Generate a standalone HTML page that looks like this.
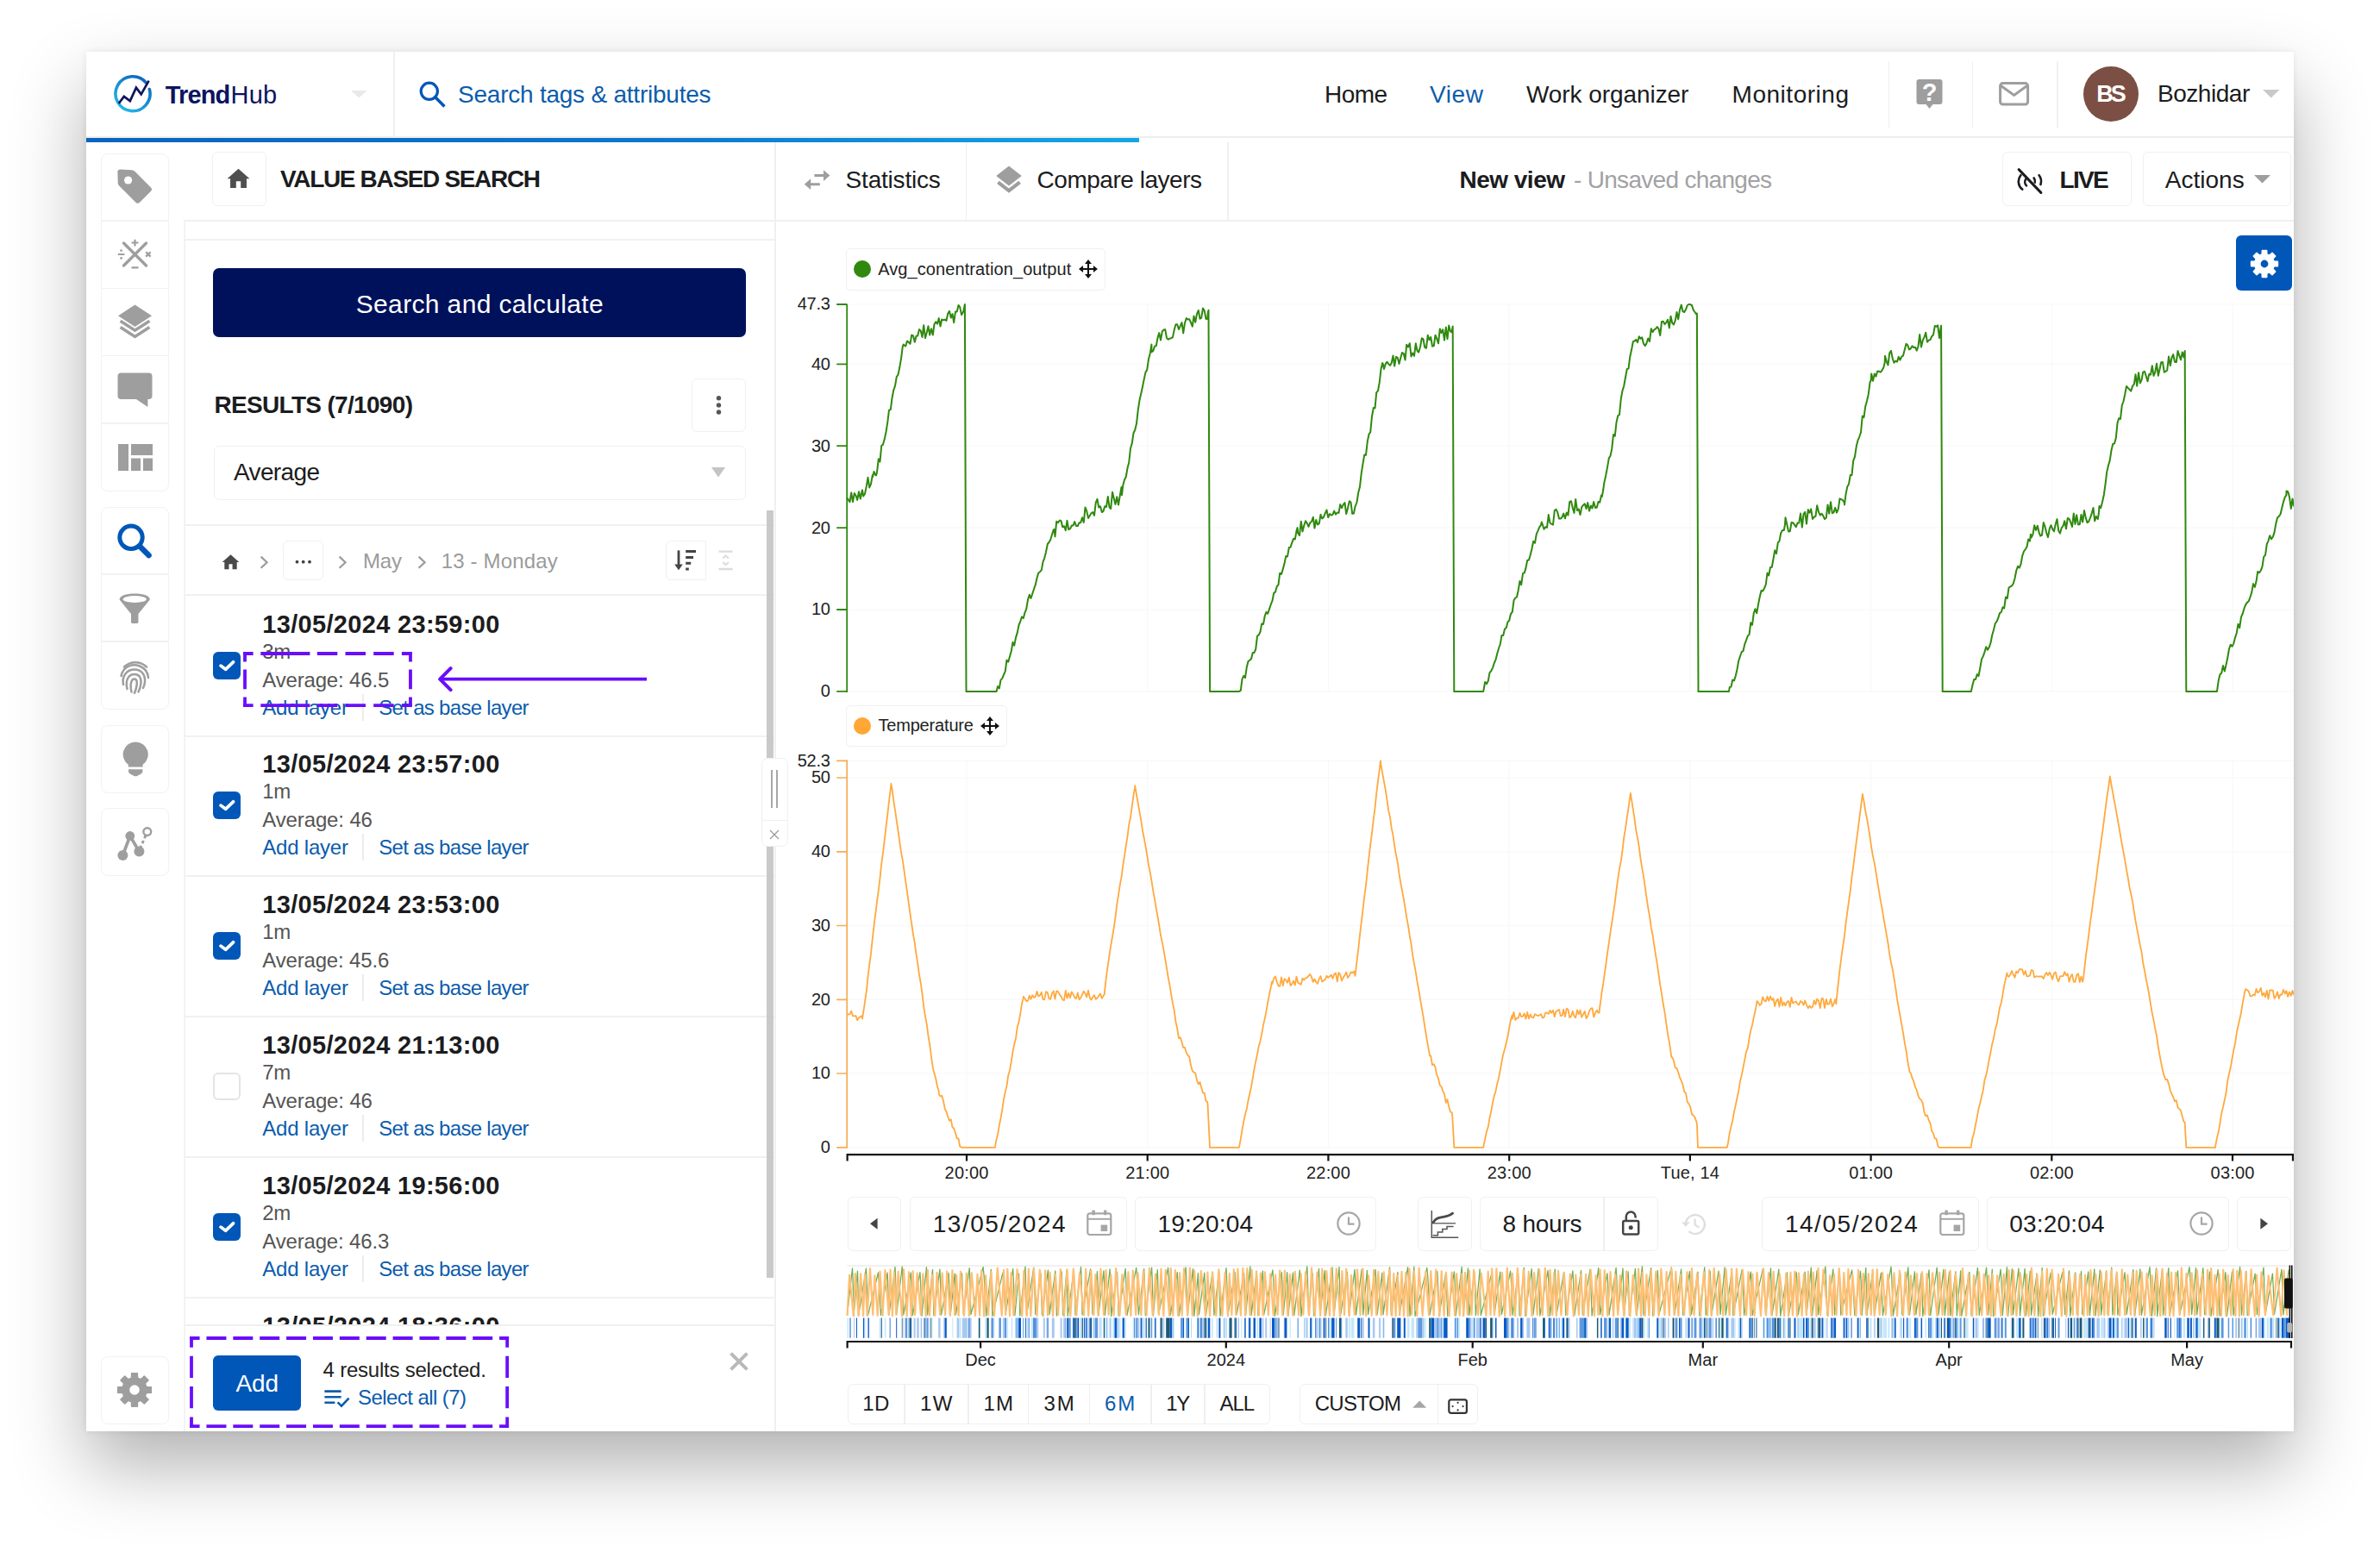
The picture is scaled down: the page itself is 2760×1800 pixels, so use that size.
<!DOCTYPE html>
<html lang="en"><head><meta charset="utf-8"><title>TrendHub - Value based search</title>
<style>
*{box-sizing:border-box;margin:0;padding:0}
html,body{width:2760px;height:1800px;background:#fff;overflow:hidden}
body{position:relative;font-family:"Liberation Sans",sans-serif;color:#1b1c20}
.b{position:absolute;display:block}
.t{position:absolute;white-space:pre;line-height:1;display:block}
#win{position:absolute;left:100px;top:60px;width:2560px;height:1600px;background:#fff;
 box-shadow:0 40px 80px rgba(0,0,0,.305),0 0 7px rgba(0,0,0,.08)}
.btn{position:absolute;background:#fff;border:1.7px solid #f0f0f1;border-radius:6px}
.ln{position:absolute;background:#ededed}
</style></head>
<body>
<div id="win"></div>
<div class="b" style="left:100.0px;top:158.3px;width:2560.0px;height:1.7px;background:#eeeeef"></div>
<div class="b" style="left:100.0px;top:160.4px;width:1220.6px;height:4.5px;background:linear-gradient(90deg,#0a63bf 0%,#0b78cf 55%,#14a7e4 100%)"></div>
<div class="b" style="left:456.0px;top:60.0px;width:1.6px;height:99.0px;background:#f0f0f1"></div>
<svg class="b" style="left:128.2px;top:86.4px;" width="50" height="50" viewBox="0 0 50 50"><defs><linearGradient id="lg" x1="0.1" y1="1" x2="0.8" y2="0"><stop offset="0" stop-color="#27bdea"/><stop offset="1" stop-color="#0a66bd"/></linearGradient></defs><path d="M41.6 10.2A20 20 0 1 0 45.3 17.5" fill="none" stroke="url(#lg)" stroke-width="3.6" stroke-linecap="round"/><path d="M9.7 34L15.8 25.9L22.8 31.1L29.9 15.6L35.7 23.4L44.6 7.6" fill="none" stroke="#10145a" stroke-width="2.7" stroke-linejoin="miter"/></svg>
<span class="t" style="left:191.8px;top:95.7px;font-size:29px;color:#0b1560;font-weight:700;letter-spacing:-0.86px;">Trend</span>
<span class="t" style="left:267.6px;top:95.7px;font-size:29px;color:#0b1560;letter-spacing:0.15px;">Hub</span>
<svg class="b" style="left:407.0px;top:104.5px;" width="19" height="9" viewBox="0 0 19 9"><path d="M0 0H18.5L9.25 8.6z" fill="#e9e9e9"/></svg>
<svg class="b" style="left:484.4px;top:92.0px;" width="34" height="34" viewBox="0 0 34 34"><circle cx="13.8" cy="13.8" r="9.6" fill="none" stroke="#0057b8" stroke-width="3.2"/><path d="M20.8 20.8L30.2 30.2" stroke="#0057b8" stroke-width="3.6" stroke-linecap="square"/></svg>
<span class="t" style="left:531.0px;top:96.0px;font-size:28px;color:#0b5cad;letter-spacing:-0.23px;">Search tags &amp; attributes</span>
<span class="t" style="left:1536.0px;top:96.0px;font-size:28px;color:#1b1c20;letter-spacing:-0.56px;">Home</span>
<span class="t" style="left:1658.0px;top:96.0px;font-size:28px;color:#0b5cad;letter-spacing:0.61px;">View</span>
<span class="t" style="left:1770.0px;top:96.0px;font-size:28px;color:#1b1c20;letter-spacing:-0.07px;">Work organizer</span>
<span class="t" style="left:2008.6px;top:96.0px;font-size:28px;color:#1b1c20;letter-spacing:0.52px;">Monitoring</span>
<div class="b" style="left:2190.2px;top:70.5px;width:1.3px;height:77.0px;background:#f0f0f1"></div>
<div class="b" style="left:2286.5px;top:70.5px;width:1.3px;height:77.0px;background:#f0f0f1"></div>
<div class="b" style="left:2385.4px;top:70.5px;width:1.3px;height:77.0px;background:#f0f0f1"></div>
<svg class="b" style="left:2222.0px;top:91.0px;" width="32" height="37" viewBox="0 0 32 37"><path d="M3.5 1H27.5A3 3 0 0 1 30.5 4V27A3 3 0 0 1 27.5 30H19.5L15.5 35L11.5 30H3.5A3 3 0 0 1 0.5 27V4A3 3 0 0 1 3.5 1z" fill="#9e9e9e"/><text x="15.5" y="26.4" font-family='"Liberation Sans",sans-serif' font-weight="700" font-size="29" fill="#fff" text-anchor="middle">?</text></svg>
<svg class="b" style="left:2318.0px;top:94.6px;" width="36" height="29" viewBox="0 0 36 29"><rect x="1.6" y="1.6" width="32" height="24.4" rx="3" fill="none" stroke="#9e9e9e" stroke-width="3"/><path d="M2.5 4.5L17.6 15.5L32.7 4.5" fill="none" stroke="#9e9e9e" stroke-width="3"/></svg>
<div class="b" style="left:2416.4px;top:77.0px;width:64.0px;height:64.0px;background:#7b4f43;border-radius:50%"></div>
<span class="t" style="left:2431.3px;top:95.7px;font-size:27px;color:#fff;font-weight:700;letter-spacing:-3.01px;">BS</span>
<span class="t" style="left:2502.0px;top:95.3px;font-size:28px;color:#1b1c20;letter-spacing:-0.46px;">Bozhidar</span>
<svg class="b" style="left:2623.5px;top:104.2px;" width="20" height="10" viewBox="0 0 20 10"><path d="M0 0H19.5L9.75 9.6z" fill="#c9c9c9"/></svg>
<div class="b" style="left:117.0px;top:177.5px;width:78.8px;height:392.3px;border:1.7px solid #f2f2f4;border-radius:8px;background:#fff"></div>
<div class="b" style="left:117.0px;top:255.3px;width:78.8px;height:1.7px;background:#f2f2f4"></div>
<div class="b" style="left:117.0px;top:333.8px;width:78.8px;height:1.7px;background:#f2f2f4"></div>
<div class="b" style="left:117.0px;top:411.8px;width:78.8px;height:1.7px;background:#f2f2f4"></div>
<div class="b" style="left:117.0px;top:490.2px;width:78.8px;height:1.7px;background:#f2f2f4"></div>
<div class="b" style="left:117.0px;top:587.8px;width:78.8px;height:235.0px;border:1.7px solid #f2f2f4;border-radius:8px;background:#fff"></div>
<div class="b" style="left:117.0px;top:665.0px;width:78.8px;height:1.7px;background:#f2f2f4"></div>
<div class="b" style="left:117.0px;top:743.4px;width:78.8px;height:1.7px;background:#f2f2f4"></div>
<div class="b" style="left:117.0px;top:840.5px;width:78.8px;height:79.1px;border:1.7px solid #f2f2f4;border-radius:8px;background:#fff"></div>
<div class="b" style="left:117.0px;top:937.4px;width:78.8px;height:78.6px;border:1.7px solid #f2f2f4;border-radius:8px;background:#fff"></div>
<div class="b" style="left:117.0px;top:1573.0px;width:78.8px;height:78.6px;border:1.7px solid #f2f2f4;border-radius:8px;background:#fff"></div>
<svg class="b" style="left:136.0px;top:196.0px;" width="41" height="42" viewBox="0 0 41 42"><path d="M3.5 0.6L17 1.2Q19 1.4 20.4 2.8L39 21.4Q41 23.6 39 25.8L26 38.8Q23.6 41 21.4 38.8L2.2 19.6Q0.8 18.2 0.7 16.2L0.4 3.6Q0.4 0.6 3.5 0.6z" fill="#9e9e9e"/><circle cx="12.6" cy="13" r="4.6" fill="#fff"/></svg>
<svg class="b" style="left:136.0px;top:277.0px;" width="41" height="36" viewBox="0 0 41 36"><g stroke="#9e9e9e" stroke-width="3.4" stroke-linecap="round" fill="none"><path d="M7.5 5L33.5 31M33.5 5L7.5 31"/></g><g stroke="#9e9e9e" stroke-width="2.2" fill="none"><path d="M16.5 4.5H24.5M20.5 0.8V8.5M16.5 33.3H24.5M0.8 18H8.4M33.2 15.2L38.6 20.6M38.6 15.2L33.2 20.6"/></g><circle cx="4.6" cy="13.6" r="1.4" fill="#9e9e9e"/><circle cx="4.6" cy="22.4" r="1.4" fill="#9e9e9e"/></svg>
<svg class="b" style="left:136.0px;top:353.0px;" width="41" height="41" viewBox="0 0 41 41"><path d="M20.5 0.6L40 13.3L20.5 26L1 13.3z" fill="#9e9e9e"/><path d="M3.6 19.2L20.5 30.2L37.4 19.2" fill="none" stroke="#9e9e9e" stroke-width="3.6"/><path d="M3.6 26.4L20.5 37.4L37.4 26.4" fill="none" stroke="#9e9e9e" stroke-width="3.6"/></svg>
<svg class="b" style="left:136.0px;top:431.6px;" width="41" height="41" viewBox="0 0 41 41"><path d="M4.5 0.4H36.5A4 4 0 0 1 40.5 4.4V27A4 4 0 0 1 36.5 31H35.4V40L22 31H4.5A4 4 0 0 1 0.5 27V4.4A4 4 0 0 1 4.5 0.4z" fill="#9e9e9e"/></svg>
<svg class="b" style="left:136.5px;top:515.0px;" width="40" height="31" viewBox="0 0 40 31"><path d="M0 0H12V31H0zM15 0H40V13H15zM15 16.5H26V31H15zM29 16.5H40V31H29z" fill="#9e9e9e"/></svg>
<svg class="b" style="left:132.0px;top:603.0px;" width="48" height="48" viewBox="0 0 48 48"><circle cx="20" cy="20.3" r="13.2" fill="none" stroke="#0057b8" stroke-width="5"/><path d="M30 30.5L40.5 41" stroke="#0057b8" stroke-width="6.6" stroke-linecap="round"/></svg>
<svg class="b" style="left:138.0px;top:687.6px;" width="37" height="36" viewBox="0 0 37 36"><path d="M0.6 7.5C0.6 2.5 8 0.4 18.2 0.4S35.8 2.5 35.8 7.5L22.4 24V33.4Q22.4 35 20.6 35H15.8Q14 35 14 33.4V24z" fill="#9e9e9e"/><ellipse cx="18.2" cy="7" rx="13.6" ry="3.9" fill="#fff"/></svg>
<svg class="b" style="left:138.0px;top:763.5px;" width="37" height="41" viewBox="0 0 37 41"><g fill="none" stroke="#9e9e9e" stroke-width="2.5" stroke-linecap="round"><path d="M6 9.5C13 2.5 25 2.5 32 9.5"/><path d="M2.5 20C5 8 16 5.5 24 8.5C30 11 33.5 16 34 22"/><path d="M5 30C3 20 9 12.5 18 12.5C26.5 12.5 30.5 19 30 26.5C29.8 29.5 29 32 28 34"/><path d="M9.5 35C7 25 11 18 18 18C24 18 26 23 25.5 28C25.2 32 24 35.5 22.5 38.5"/><path d="M14.5 38.5C12.5 30 14 23.5 18 23.5C21 23.5 21 28 20.5 31C20 34.5 19 37.5 18 39.8"/></g></svg>
<svg class="b" style="left:141.0px;top:860.0px;" width="32" height="41" viewBox="0 0 32 41"><path d="M16.2 0.6A14.4 14.4 0 0 1 24.6 26.8V29.6H7.8V26.8A14.4 14.4 0 0 1 16.2 0.6z" fill="#9e9e9e"/><path d="M8 32.2H24.4V34.4Q24.4 36.4 22.6 37.4L18.4 39.8Q16.2 40.8 14 39.8L9.8 37.4Q8 36.4 8 34.4z" fill="#9e9e9e"/></svg>
<svg class="b" style="left:134.0px;top:955.0px;" width="46" height="46" viewBox="0 0 46 46"><path d="M8.4 37L16.8 14.5L27.4 32.6" fill="none" stroke="#9e9e9e" stroke-width="3.6"/><path d="M28.5 29L36 11.5" fill="none" stroke="#9e9e9e" stroke-width="3" stroke-dasharray="3.4 3"/><circle cx="8.4" cy="37" r="6" fill="#9e9e9e"/><circle cx="16.8" cy="14.5" r="5.4" fill="#9e9e9e"/><circle cx="27.4" cy="32.6" r="6" fill="#9e9e9e"/><circle cx="36.8" cy="9.6" r="4.4" fill="#fff" stroke="#9e9e9e" stroke-width="2.4"/></svg>
<svg class="b" style="left:136.0px;top:1592.0px;" width="40" height="40" viewBox="0 0 40 40"><path d="M16.5 6.2L16.7 0.7L23.3 0.7L23.5 6.2L27.2 7.8L31.3 4.0L36.0 8.7L32.2 12.8L33.8 16.5L39.3 16.7L39.3 23.3L33.8 23.5L32.2 27.2L36.0 31.3L31.3 36.0L27.2 32.2L23.5 33.8L23.3 39.3L16.7 39.3L16.5 33.8L12.8 32.2L8.7 36.0L4.0 31.3L7.8 27.2L6.2 23.5L0.7 23.3L0.7 16.7L6.2 16.5L7.8 12.8L4.0 8.7L8.7 4.0L12.8 7.8zM26.6 20A6.6 6.6 0 1 0 13.4 20A6.6 6.6 0 1 0 26.6 20z" fill="#9e9e9e" fill-rule="evenodd" stroke="#9e9e9e" stroke-width="1.6" stroke-linejoin="round"/></svg>
<div class="b" style="left:213.7px;top:255.1px;width:2446.3px;height:1.8px;background:#f0f0f1"></div>
<div class="btn" style="left:245.6px;top:176.0px;width:63.0px;height:63.2px;"></div>
<svg class="b" style="left:263.3px;top:194.0px;" width="27" height="25" viewBox="0 0 20 18.5"><path d="M10 1.2L0.4 9.8H3V17.8H8V12H12V17.8H17V9.8H19.6z" fill="#4f4f4f"/></svg>
<span class="t" style="left:325.0px;top:194.3px;font-size:28px;color:#1b1c20;font-weight:700;letter-spacing:-1.33px;">VALUE BASED SEARCH</span>
<div class="b" style="left:897.8px;top:165.0px;width:1.8px;height:1495.0px;background:#f0f0f2"></div>
<div class="b" style="left:1119.7px;top:165.0px;width:1.6px;height:90.0px;background:#f0f0f2"></div>
<div class="b" style="left:1423.4px;top:165.0px;width:1.6px;height:90.0px;background:#f0f0f2"></div>
<svg class="b" style="left:932.0px;top:196.0px;" width="31" height="25" viewBox="0 0 31 25"><path d="M12.4 6.1H23V1.2L30.4 7.6L23 14V9.1H12.4z" fill="#9e9e9e"/><path d="M18.8 16.2H8.2V11.3L0.8 17.7L8.2 24.1V19.2H18.8z" fill="#9e9e9e"/></svg>
<span class="t" style="left:980.6px;top:195.1px;font-size:28px;color:#1b1c20;letter-spacing:-0.20px;">Statistics</span>
<svg class="b" style="left:1154.0px;top:191.5px;" width="32" height="33" viewBox="0 0 32 33"><path d="M16 0.6L30.8 12L16 23.4L1.2 12z" fill="#9e9e9e"/><path d="M3.4 19.4L16 29.2L28.6 19.4" fill="none" stroke="#9e9e9e" stroke-width="4.2"/></svg>
<span class="t" style="left:1202.6px;top:195.1px;font-size:28px;color:#1b1c20;letter-spacing:-0.48px;">Compare layers</span>
<span class="t" style="left:1692.5px;top:194.7px;font-size:28px;color:#1b1c20;font-weight:700;letter-spacing:-0.51px;">New view</span>
<span class="t" style="left:1825.0px;top:194.7px;font-size:28px;color:#a2a2a4;letter-spacing:-0.70px;">- Unsaved changes</span>
<div class="btn" style="left:2321.7px;top:176.0px;width:150.0px;height:63.2px;"></div>
<svg class="b" style="left:2339.0px;top:194.5px;" width="32" height="31" viewBox="0 0 32 31"><g fill="none" stroke="#1b1c20" stroke-width="2.6" stroke-linecap="round"><path d="M6.2 24.6A11.6 11.6 0 0 1 4.4 8.2"/><path d="M25.6 8.2A11.6 11.6 0 0 1 27.4 19"/><path d="M11 20.4A6 6 0 0 1 10.4 12.6"/><path d="M19.6 11.4A6 6 0 0 1 20.8 16.6"/></g><path d="M2.2 1.6L27.8 28.4" stroke="#1b1c20" stroke-width="3" stroke-linecap="round"/></svg>
<span class="t" style="left:2388.4px;top:195.2px;font-size:28px;color:#1b1c20;font-weight:700;letter-spacing:-1.61px;">LIVE</span>
<div class="btn" style="left:2484.6px;top:176.0px;width:172.4px;height:63.2px;"></div>
<span class="t" style="left:2510.7px;top:195.2px;font-size:28px;color:#1b1c20;letter-spacing:0.03px;">Actions</span>
<svg class="b" style="left:2614.0px;top:203.0px;" width="20" height="10" viewBox="0 0 20 10"><path d="M0 0H19L9.5 9.4z" fill="#9e9e9e"/></svg>
<div class="b" style="left:2593.3px;top:273.0px;width:64.4px;height:64.4px;background:#0057b8;border-radius:6px"></div>
<svg class="b" style="left:2607.0px;top:286.5px;" width="38" height="38" viewBox="0 0 38 38"><path d="M16.2 8.0L16.4 3.6L21.6 3.6L21.8 8.0L24.8 9.2L28.0 6.3L31.7 10.0L28.8 13.2L30.0 16.2L34.4 16.4L34.4 21.6L30.0 21.8L28.8 24.8L31.7 28.0L28.0 31.7L24.8 28.8L21.8 30.0L21.6 34.4L16.4 34.4L16.2 30.0L13.2 28.8L10.0 31.7L6.3 28.0L9.2 24.8L8.0 21.8L3.6 21.6L3.6 16.4L8.0 16.2L9.2 13.2L6.3 10.0L10.0 6.3L13.2 9.2zM24.2 19A5.2 5.2 0 1 0 13.8 19A5.2 5.2 0 1 0 24.2 19z" fill="#fff" fill-rule="evenodd" stroke="#fff" stroke-width="1.6" stroke-linejoin="round"/></svg>
<div class="btn" style="left:981.4px;top:288.0px;width:300.2px;height:48.6px;border-width:1.6px;border-radius:5px"></div>
<div class="b" style="left:989.6px;top:302.0px;width:20.0px;height:20.0px;background:#2f890e;border-radius:50%"></div>
<span class="t" style="left:1018.2px;top:301.7px;font-size:20px;color:#222;letter-spacing:0.09px;">Avg_conentration_output</span>
<svg class="b" style="left:1251.3px;top:301.4px;" width="22" height="22" viewBox="0 0 20 20"><g fill="none" stroke="#111" stroke-width="1.9"><path d="M10 2V18M2 10H18"/></g><path d="M10 0L13.6 4.6H6.4zM10 20L13.6 15.4H6.4zM0 10L4.6 6.4V13.6zM20 10L15.4 6.4V13.6z" fill="#111"/></svg>
<div class="btn" style="left:981.4px;top:818.3px;width:186.2px;height:47.8px;border-width:1.6px;border-radius:5px"></div>
<div class="b" style="left:989.6px;top:832.0px;width:20.0px;height:20.0px;background:#ffa634;border-radius:50%"></div>
<span class="t" style="left:1018.4px;top:831.0px;font-size:20px;color:#222;letter-spacing:-0.17px;">Temperature</span>
<svg class="b" style="left:1137.4px;top:831.0px;" width="22" height="22" viewBox="0 0 20 20"><g fill="none" stroke="#111" stroke-width="1.9"><path d="M10 2V18M2 10H18"/></g><path d="M10 0L13.6 4.6H6.4zM10 20L13.6 15.4H6.4zM0 10L4.6 6.4V13.6zM20 10L15.4 6.4V13.6z" fill="#111"/></svg>
<svg class="b" style="left:900.0px;top:340.0px;" width="1760" height="1020" viewBox="0 0 1760 1020"><path d="M83 461.9H1760" stroke="#f8f8f8" stroke-width="1.2"/><path d="M83 367.0H1760" stroke="#f8f8f8" stroke-width="1.2"/><path d="M83 272.1H1760" stroke="#f8f8f8" stroke-width="1.2"/><path d="M83 177.2H1760" stroke="#f8f8f8" stroke-width="1.2"/><path d="M83 82.3H1760" stroke="#f8f8f8" stroke-width="1.2"/><path d="M83 13.0H1760" stroke="#f8f8f8" stroke-width="1.2"/><path d="M83 990.8H1760" stroke="#f8f8f8" stroke-width="1.2"/><path d="M83 905.0H1760" stroke="#f8f8f8" stroke-width="1.2"/><path d="M83 819.3H1760" stroke="#f8f8f8" stroke-width="1.2"/><path d="M83 733.5H1760" stroke="#f8f8f8" stroke-width="1.2"/><path d="M83 647.8H1760" stroke="#f8f8f8" stroke-width="1.2"/><path d="M83 562.0H1760" stroke="#f8f8f8" stroke-width="1.2"/><path d="M83 542.3H1760" stroke="#f8f8f8" stroke-width="1.2"/><path d="M221.0 13.5V462M221.0 542.2V991" stroke="#f8f8f8" stroke-width="1.2"/><path d="M430.7 13.5V462M430.7 542.2V991" stroke="#f8f8f8" stroke-width="1.2"/><path d="M640.4 13.5V462M640.4 542.2V991" stroke="#f8f8f8" stroke-width="1.2"/><path d="M850.2 13.5V462M850.2 542.2V991" stroke="#f8f8f8" stroke-width="1.2"/><path d="M1059.9 13.5V462M1059.9 542.2V991" stroke="#f8f8f8" stroke-width="1.2"/><path d="M1269.6 13.5V462M1269.6 542.2V991" stroke="#f8f8f8" stroke-width="1.2"/><path d="M1479.3 13.5V462M1479.3 542.2V991" stroke="#f8f8f8" stroke-width="1.2"/><path d="M1689.0 13.5V462M1689.0 542.2V991" stroke="#f8f8f8" stroke-width="1.2"/><path d="M82.0 237.0L83.8 239.6L85.5 242.2L87.2 231.5L89.0 242.1L90.8 232.1L92.5 234.7L94.2 239.9L96.0 230.2L97.8 238.6L99.5 230.0L100.0 228.4L101.2 235.4L103.0 232.7L104.8 223.9L106.5 213.8L108.2 225.4L110.0 221.3L111.8 211.1L112.0 213.3L113.5 207.0L115.2 210.8L116.0 211.4L117.0 207.8L118.8 192.3L120.5 195.4L122.2 177.0L124.0 175.6L125.8 169.1L127.5 161.0L129.2 150.3L131.0 135.6L132.8 135.1L134.5 121.7L136.2 112.7L138.0 107.6L139.8 97.0L141.5 94.6L143.2 86.3L145.0 76.1L146.8 61.8L147.7 59.5L148.5 60.4L150.2 61.5L152.0 55.5L153.8 56.9L155.5 58.8L157.2 48.6L159.0 49.4L160.8 56.8L162.5 49.7L164.2 49.6L166.0 42.1L167.8 43.8L169.5 51.0L171.2 37.2L173.0 52.1L174.8 45.6L176.5 38.3L178.2 48.5L180.0 41.3L181.8 48.6L183.5 36.0L185.2 33.2L187.0 35.7L188.8 29.1L190.5 38.5L192.2 30.5L194.0 31.3L195.8 30.6L197.5 31.9L199.2 23.8L201.0 20.9L202.8 28.6L204.5 24.1L206.2 34.2L208.0 21.4L209.8 21.4L211.5 14.0L213.2 16.1L215.0 25.1L216.8 22.2L217.5 19.7L218.5 14.9L218.9 13.0L220.2 391.8L220.5 461.9L222.0 461.9L223.8 461.9L225.5 461.9L227.2 461.9L229.0 461.9L230.8 461.9L232.5 461.9L234.2 461.9L236.0 461.9L237.8 461.9L239.5 461.9L241.2 461.9L243.0 461.9L244.8 461.9L246.5 461.9L248.2 461.9L250.0 461.9L251.8 461.9L253.5 461.9L255.2 461.9L255.6 461.9L257.0 456.1L258.8 458.4L260.5 448.6L262.2 446.9L264.0 442.6L265.8 438.3L267.5 425.5L269.2 427.7L271.0 421.5L272.8 415.0L274.5 404.8L276.2 408.6L278.0 399.6L279.8 393.6L281.5 385.0L283.2 380.8L285.0 375.4L286.8 377.0L288.5 370.6L290.2 366.3L292.0 355.6L293.8 349.8L295.5 353.9L297.2 348.7L299.0 343.2L300.8 338.2L302.5 330.5L304.2 324.5L306.0 323.2L307.8 321.2L309.5 311.6L311.2 307.3L313.0 300.2L314.8 291.0L316.5 289.0L318.2 286.0L320.0 280.0L321.8 274.4L322.6 274.0L323.5 282.3L325.2 264.8L327.0 266.2L328.8 263.5L330.5 264.1L332.2 271.2L334.0 270.2L335.8 275.1L337.5 263.8L339.2 274.2L341.0 273.2L342.8 269.5L344.5 269.5L346.2 265.1L348.0 269.9L349.8 270.1L351.5 266.2L353.2 266.3L355.0 260.2L356.8 266.0L358.5 248.4L360.2 252.6L362.0 260.9L363.8 258.0L365.5 255.2L367.2 254.0L369.0 257.9L370.8 242.6L372.5 238.9L374.2 248.4L376.0 247.2L377.8 254.1L379.5 252.9L381.2 247.3L383.0 247.9L384.8 235.9L386.5 248.2L388.2 250.0L390.0 230.8L391.8 238.3L393.5 244.9L395.2 236.2L397.0 245.5L398.8 234.7L400.5 224.9L401.0 234.1L402.2 223.3L404.0 216.5L405.8 213.0L407.5 202.8L409.2 196.4L411.0 180.0L412.8 174.1L414.5 162.2L416.2 158.8L418.0 151.3L419.8 135.1L421.5 124.1L423.2 116.8L425.0 108.5L426.8 99.5L428.5 91.6L430.2 89.0L432.0 76.6L433.8 69.7L435.4 59.5L435.5 68.2L437.2 67.2L439.0 61.6L440.8 61.0L442.5 51.9L444.2 46.1L446.0 54.5L447.8 44.4L449.5 42.5L451.2 42.1L453.0 52.1L454.8 53.7L456.5 52.6L458.2 52.2L460.0 51.1L461.8 42.3L463.5 36.2L465.2 36.3L467.0 42.0L468.8 37.8L470.5 34.1L472.2 46.4L474.0 34.7L475.8 29.1L477.5 30.5L479.2 30.1L481.0 34.1L482.8 38.7L484.5 26.4L486.2 33.8L488.0 24.2L489.8 20.0L491.5 29.7L493.2 28.6L495.0 17.5L496.8 20.6L498.5 29.9L500.2 29.7L500.8 22.5L501.5 19.7L502.0 157.9L503.1 461.9L503.8 461.9L505.5 461.9L507.2 461.9L509.0 461.9L510.8 461.9L512.5 461.9L514.2 461.9L516.0 461.9L517.8 461.9L519.5 461.9L521.2 461.9L523.0 461.9L524.8 461.9L526.5 461.9L528.2 461.9L530.0 461.9L531.8 461.9L533.5 461.9L535.2 461.9L537.0 461.9L538.8 460.9L540.5 447.6L542.2 443.8L544.0 446.2L545.8 433.7L547.5 427.1L549.2 425.8L551.0 424.3L552.8 417.1L554.5 416.9L556.2 413.2L558.0 397.7L559.8 396.4L561.5 392.8L563.2 383.4L565.0 384.0L566.8 374.2L568.5 369.8L570.2 371.8L572.0 366.4L573.8 361.0L575.5 356.7L577.2 347.9L579.0 346.6L580.8 340.0L582.5 338.2L584.2 324.7L586.0 325.9L587.8 319.9L589.5 313.6L591.2 305.1L593.0 305.6L594.8 295.1L596.5 294.8L598.2 289.6L600.0 284.8L601.8 285.4L603.5 275.9L604.6 272.1L605.2 278.1L607.0 281.0L608.8 264.7L610.5 276.4L612.2 269.8L614.0 264.2L615.8 266.9L617.5 270.8L619.2 266.3L621.0 265.0L622.8 259.8L624.5 272.5L626.2 262.9L628.0 268.4L629.8 267.2L631.5 256.8L633.2 261.4L635.0 259.7L636.8 255.1L638.5 251.5L640.2 260.1L642.0 256.1L643.8 257.6L645.5 256.8L647.2 252.6L649.0 256.7L650.8 254.4L652.5 254.9L654.2 245.1L656.0 249.2L657.8 245.1L659.5 243.1L661.2 256.0L663.0 249.4L664.8 241.2L666.5 242.6L668.2 255.8L670.0 255.4L671.5 247.4L671.8 246.9L673.5 242.5L675.2 231.5L677.0 224.6L678.8 208.3L680.5 197.9L682.2 187.6L684.0 187.8L685.8 171.9L687.5 163.7L689.2 161.1L691.0 143.0L692.8 133.0L694.5 133.3L696.2 115.3L698.0 113.2L699.8 103.2L701.5 88.0L703.2 81.0L703.8 82.3L705.0 88.0L706.8 82.1L708.5 79.7L710.2 82.1L712.0 83.9L713.8 80.7L715.5 72.4L717.2 84.5L719.0 73.7L720.8 75.0L722.5 81.9L724.2 75.3L726.0 69.0L727.8 70.2L729.5 77.6L731.2 59.7L733.0 62.5L734.8 58.2L736.5 73.4L738.2 69.5L740.0 72.8L741.8 58.3L743.5 66.8L745.2 68.6L747.0 62.3L748.8 52.3L750.5 53.2L752.2 62.7L754.0 63.8L755.8 48.7L757.5 54.3L759.2 51.0L761.0 61.5L762.8 61.2L764.5 48.7L766.2 52.6L768.0 58.3L769.8 41.4L771.5 46.2L773.2 42.2L775.0 54.6L776.8 39.5L778.5 53.2L780.2 37.6L782.0 44.3L783.8 45.5L784.0 42.4L784.7 38.6L785.5 250.3L786.3 461.9L787.2 461.9L789.0 461.9L790.8 461.9L792.5 461.9L794.2 461.9L796.0 461.9L797.8 461.9L799.5 461.9L801.2 461.9L803.0 461.9L804.8 461.9L806.5 461.9L808.2 461.9L810.0 461.9L811.8 461.9L813.5 461.9L815.2 461.9L817.0 461.9L818.8 461.9L820.1 461.9L820.5 460.2L822.2 450.9L824.0 453.2L825.8 449.6L827.5 440.1L829.2 438.3L831.0 434.6L832.8 429.0L834.5 425.1L836.2 418.3L838.0 412.0L839.8 407.0L841.5 396.9L843.2 397.1L845.0 389.6L846.8 388.1L848.5 381.2L850.2 379.8L852.0 372.1L853.8 369.6L855.5 356.6L857.2 353.5L859.0 352.5L860.8 344.2L862.5 334.0L864.2 338.2L866.0 325.2L867.8 324.4L869.5 318.6L871.2 309.8L873.0 309.6L874.8 303.2L876.5 296.2L878.2 287.8L880.0 289.8L881.8 279.3L883.5 275.6L885.2 271.3L887.0 268.8L887.8 265.5L888.8 268.3L890.5 273.7L892.2 271.3L894.0 271.9L895.8 257.1L897.5 266.5L899.2 267.7L901.0 268.6L902.8 252.0L904.5 250.7L906.2 254.1L908.0 261.5L909.8 261.6L911.5 259.8L913.2 255.6L915.0 261.2L916.8 254.4L918.5 257.5L920.2 242.1L922.0 241.2L923.8 249.3L925.5 254.9L927.2 239.1L929.0 252.1L930.8 250.4L932.5 257.1L934.2 248.4L936.0 245.7L937.8 244.4L939.5 250.0L941.2 242.9L943.0 252.6L944.8 246.4L946.5 249.4L948.2 242.1L950.0 248.9L951.8 248.6L953.5 241.9L955.2 242.7L957.0 234.5L957.7 236.0L958.8 230.5L960.5 219.1L962.2 211.5L964.0 202.1L965.8 191.4L967.5 188.8L969.2 180.9L971.0 164.0L972.8 165.7L974.5 149.9L976.2 142.2L978.0 140.9L979.8 122.5L981.5 113.1L983.2 107.7L985.0 97.7L986.8 88.0L988.5 87.6L990.2 74.2L992.0 65.7L992.5 63.3L993.8 56.2L995.5 55.5L997.2 53.9L999.0 57.1L1000.8 50.2L1002.5 52.8L1004.2 51.3L1006.0 58.7L1007.8 61.1L1009.5 58.0L1011.2 52.5L1013.0 56.0L1014.8 41.2L1016.5 45.1L1018.2 42.5L1020.0 41.3L1021.8 39.1L1023.5 41.3L1025.2 49.1L1027.0 33.1L1028.8 32.8L1030.5 36.1L1032.2 34.2L1034.0 30.7L1035.8 40.4L1037.5 26.8L1039.2 34.5L1041.0 36.5L1042.8 31.7L1044.5 21.9L1046.2 30.3L1048.0 19.2L1049.8 13.6L1051.5 21.2L1053.2 22.0L1055.0 19.0L1056.8 14.0L1058.5 13.0L1060.2 13.0L1061.5 14.0L1062.0 14.1L1063.8 19.6L1065.5 22.0L1067.2 24.3L1067.5 23.5L1067.9 23.5L1069.0 324.9L1069.5 461.9L1070.8 461.9L1072.5 461.9L1074.2 461.9L1076.0 461.9L1077.8 461.9L1079.5 461.9L1081.2 461.9L1083.0 461.9L1084.8 461.9L1086.5 461.9L1088.2 461.9L1090.0 461.9L1091.8 461.9L1093.5 461.9L1095.2 461.9L1097.0 461.9L1098.8 461.9L1100.5 461.9L1102.2 461.9L1104.0 461.9L1105.0 461.9L1105.8 457.0L1107.5 456.6L1109.2 448.5L1111.0 449.4L1112.8 443.7L1114.5 436.2L1116.2 426.5L1118.0 421.0L1119.8 416.0L1121.5 415.1L1123.2 407.4L1125.0 402.7L1126.8 397.5L1128.5 396.1L1130.2 382.3L1132.0 384.8L1133.8 371.0L1135.5 366.2L1137.2 371.2L1139.0 361.1L1140.8 351.9L1142.5 345.0L1144.2 345.6L1146.0 342.4L1147.8 337.8L1149.5 324.4L1151.2 327.4L1153.0 318.0L1154.8 317.7L1156.5 308.2L1158.2 298.3L1160.0 302.2L1161.8 289.3L1163.5 287.6L1165.2 278.2L1167.0 275.0L1168.8 275.0L1170.0 268.3L1170.5 260.3L1172.2 267.8L1174.0 276.4L1175.8 276.2L1177.5 266.0L1179.2 266.2L1181.0 268.6L1182.8 271.2L1184.5 266.6L1186.2 266.6L1188.0 255.6L1189.8 271.6L1191.5 256.3L1193.2 253.9L1195.0 267.6L1196.8 251.1L1198.5 254.7L1200.2 250.4L1202.0 261.9L1203.8 259.7L1205.5 258.7L1207.2 246.2L1209.0 253.7L1210.8 257.6L1212.5 255.7L1214.2 258.1L1216.0 262.0L1217.8 260.4L1219.5 245.4L1221.2 255.6L1223.0 242.2L1224.8 255.2L1226.5 254.3L1228.2 248.9L1230.0 254.6L1231.8 250.4L1233.5 238.3L1235.2 239.2L1237.0 240.0L1238.8 243.0L1239.0 245.5L1240.5 233.4L1242.2 224.8L1244.0 221.4L1245.8 211.0L1247.5 211.0L1249.2 194.3L1251.0 189.6L1252.8 177.6L1254.5 170.7L1256.2 166.8L1258.0 161.5L1259.8 142.4L1261.5 144.1L1263.2 131.6L1265.0 124.9L1266.8 117.2L1268.5 103.5L1269.6 101.3L1270.2 93.4L1272.0 101.7L1273.8 93.6L1275.5 96.6L1277.2 90.5L1279.0 90.7L1280.8 91.7L1282.5 89.6L1284.2 86.6L1285.7 80.4L1286.0 72.7L1287.8 79.3L1289.5 83.4L1291.2 69.6L1293.0 66.9L1294.8 76.0L1296.5 80.7L1298.2 78.7L1300.0 79.6L1301.8 73.9L1303.5 77.5L1305.2 73.7L1307.0 72.4L1308.8 65.6L1310.5 58.7L1312.2 60.2L1314.0 65.4L1315.8 64.3L1317.5 61.3L1319.2 63.0L1321.0 62.7L1322.8 66.7L1324.5 61.7L1326.2 47.9L1328.0 62.5L1329.8 54.5L1331.5 51.1L1333.2 45.7L1335.0 56.7L1336.8 54.6L1338.5 54.0L1340.2 50.2L1342.0 48.3L1343.8 37.9L1345.5 38.8L1347.2 37.3L1349.0 52.1L1350.3 42.4L1350.8 39.8L1351.1 37.7L1352.5 408.9L1352.7 461.9L1354.2 461.9L1356.0 461.9L1357.8 461.9L1359.5 461.9L1361.2 461.9L1363.0 461.9L1364.8 461.9L1366.5 461.9L1368.2 461.9L1370.0 461.9L1371.8 461.9L1373.5 461.9L1375.2 461.9L1377.0 461.9L1378.8 461.9L1380.5 461.9L1382.2 461.9L1384.0 461.9L1385.6 461.9L1385.8 461.9L1387.5 454.6L1389.2 447.9L1391.0 448.0L1392.8 442.1L1394.5 444.0L1396.2 435.1L1398.0 424.6L1399.8 421.1L1401.5 416.1L1403.2 410.3L1405.0 413.7L1406.8 410.6L1408.5 405.5L1410.2 396.8L1412.0 390.5L1413.8 383.0L1415.5 380.8L1417.2 377.0L1419.0 371.1L1420.8 370.0L1422.5 364.3L1424.2 365.4L1426.0 352.5L1427.8 354.0L1429.5 341.8L1431.2 340.3L1433.0 339.5L1434.8 336.8L1436.5 330.8L1438.2 322.0L1440.0 316.7L1441.8 318.6L1443.5 314.4L1445.2 304.8L1447.0 299.5L1448.8 297.1L1450.5 294.3L1452.2 285.5L1454.0 287.5L1454.9 279.7L1455.8 283.4L1457.5 279.7L1459.2 269.3L1461.0 275.0L1462.8 269.8L1464.5 277.3L1466.2 281.5L1468.0 280.7L1469.8 266.1L1471.5 270.7L1473.2 278.0L1475.0 283.1L1476.8 273.2L1478.5 269.2L1480.2 273.6L1482.0 276.3L1483.8 267.7L1485.5 262.1L1487.2 275.4L1489.0 278.6L1490.8 272.1L1492.5 270.0L1494.2 264.3L1496.0 273.3L1497.8 260.9L1499.5 261.6L1501.2 265.7L1503.0 271.0L1504.8 255.4L1506.5 267.9L1508.2 257.3L1510.0 268.4L1511.8 268.1L1513.5 256.9L1515.2 265.6L1517.0 252.1L1518.8 260.6L1520.5 266.1L1522.2 264.9L1524.0 260.6L1525.8 255.1L1527.5 249.0L1529.2 264.3L1531.0 258.9L1532.8 261.9L1533.8 256.0L1534.5 246.9L1536.2 249.1L1538.0 242.2L1539.8 234.0L1541.5 221.9L1543.2 207.6L1545.0 199.7L1546.8 193.6L1548.5 182.2L1550.2 175.0L1552.0 174.4L1553.8 168.1L1555.5 150.8L1557.2 145.1L1559.0 145.9L1560.8 130.0L1562.5 125.5L1564.2 117.5L1566.0 107.9L1567.8 109.9L1569.5 111.7L1571.2 113.6L1573.0 107.9L1574.8 105.7L1576.5 94.3L1578.2 107.7L1580.0 92.2L1581.8 104.3L1583.5 100.7L1585.2 91.7L1587.0 90.8L1588.8 96.5L1590.5 102.2L1592.2 93.9L1594.0 94.7L1595.8 84.2L1597.5 95.8L1599.2 91.9L1601.0 81.7L1602.8 95.7L1604.5 88.2L1606.2 80.3L1608.0 80.1L1609.8 91.7L1611.5 90.8L1613.2 89.4L1615.0 73.6L1616.8 84.1L1618.5 74.7L1620.2 71.1L1622.0 79.8L1623.8 80.0L1625.5 67.1L1627.2 72.1L1629.0 77.2L1630.8 68.4L1632.5 74.4L1633.0 70.9L1633.7 67.1L1634.2 202.8L1635.3 461.9L1636.0 461.9L1637.8 461.9L1639.5 461.9L1641.2 461.9L1643.0 461.9L1644.8 461.9L1646.5 461.9L1648.2 461.9L1650.0 461.9L1651.8 461.9L1653.5 461.9L1655.2 461.9L1657.0 461.9L1658.8 461.9L1660.5 461.9L1662.2 461.9L1664.0 461.9L1665.8 461.9L1667.5 461.9L1669.2 461.9L1669.2 461.9L1671.0 461.9L1672.8 448.9L1674.5 442.1L1676.2 440.7L1678.0 432.0L1679.8 438.5L1681.5 431.1L1683.2 423.3L1685.0 412.5L1686.8 407.7L1688.5 409.8L1690.2 406.6L1692.0 399.6L1693.8 394.0L1695.5 383.7L1697.2 388.1L1699.0 375.6L1700.8 371.5L1702.5 365.7L1704.2 361.4L1706.0 358.6L1707.8 357.2L1709.5 352.5L1711.2 347.1L1713.0 337.1L1714.8 340.9L1716.5 334.6L1718.2 322.9L1720.0 324.3L1721.8 321.7L1723.5 317.2L1725.2 305.9L1727.0 303.9L1728.8 291.0L1730.5 287.3L1732.2 281.2L1734.0 285.3L1735.8 282.6L1737.5 277.6L1739.2 267.8L1741.0 260.4L1742.8 258.8L1744.5 256.5L1746.2 249.4L1748.0 242.1L1749.8 236.6L1751.4 234.1L1751.5 229.4L1753.2 230.1L1755.0 236.5L1756.8 249.9L1758.5 238.4L1760.0 247.4" fill="none" stroke="#2f890e" stroke-width="2" stroke-linejoin="round"/><path d="M82.0 835.6L83.8 836.7L85.5 836.1L87.2 832.6L89.0 838.3L90.8 838.4L92.5 838.1L94.2 843.2L96.0 840.1L97.8 839.4L99.5 838.1L100.0 841.6L101.2 834.2L103.0 822.1L104.0 815.0L104.8 810.1L106.5 793.0L108.2 778.8L110.0 766.3L111.8 748.5L113.5 733.9L115.2 720.3L117.0 705.8L118.8 692.7L120.5 678.5L122.2 662.1L124.0 649.0L125.8 633.9L127.5 619.1L129.2 605.2L131.0 589.1L132.8 574.5L133.4 568.9L134.5 575.2L136.2 588.1L138.0 599.6L139.8 612.0L141.5 623.3L143.2 635.9L145.0 648.3L146.8 657.8L148.5 669.7L150.2 682.1L152.0 694.4L153.8 707.6L155.5 719.8L157.2 731.4L159.0 744.0L160.8 753.6L162.5 766.7L164.2 777.1L166.0 790.5L167.8 800.5L169.5 812.7L171.2 827.4L173.0 838.6L174.8 848.1L176.5 861.5L178.2 871.7L180.0 885.5L181.8 898.4L182.3 900.8L183.5 904.8L185.2 911.0L187.0 920.0L188.7 925.6L188.8 929.0L190.5 931.4L192.2 930.8L194.0 936.8L195.8 946.1L197.5 949.5L199.2 955.0L201.0 959.7L202.8 958.3L204.5 967.4L206.2 968.8L208.0 974.0L209.8 980.4L211.5 980.5L213.2 989.6L214.9 990.8L215.0 990.8L216.8 990.8L218.5 990.8L220.2 990.8L222.0 990.8L223.8 990.8L225.5 990.8L227.2 990.8L229.0 990.8L230.8 990.8L232.5 990.8L234.2 990.8L236.0 990.8L237.8 990.8L239.5 990.8L241.2 990.8L243.0 990.8L244.8 990.8L246.5 990.8L248.2 990.8L250.0 990.8L251.8 990.8L253.5 990.8L253.9 990.8L255.2 983.0L257.0 976.0L258.8 965.4L260.5 957.0L262.2 947.4L264.0 935.0L265.8 926.4L267.5 919.4L269.2 907.5L271.0 901.2L272.8 891.0L274.5 879.7L276.2 871.3L278.0 864.4L279.8 851.2L281.5 845.3L283.2 835.8L285.0 824.2L286.8 816.9L286.8 815.8L288.5 818.3L290.2 821.0L292.0 820.7L293.8 814.6L295.5 818.8L297.2 814.3L299.0 817.1L300.8 816.0L302.5 809.8L304.2 815.6L306.0 814.4L307.8 810.8L309.5 819.1L311.2 819.4L313.0 810.1L314.8 811.2L316.5 818.1L318.2 818.8L320.0 812.0L321.8 809.5L323.5 818.6L325.2 809.3L327.0 810.1L328.8 813.4L330.5 815.6L332.2 819.5L334.0 820.2L335.8 808.8L337.5 817.7L339.2 811.9L341.0 817.3L342.8 810.3L344.5 813.1L346.2 816.8L348.0 818.2L349.8 811.4L351.5 819.4L353.2 817.4L355.0 813.3L356.8 809.6L358.5 812.5L360.2 816.5L362.0 808.7L363.8 817.4L365.5 819.6L367.2 816.5L369.0 814.3L370.8 818.9L372.5 817.5L374.2 815.1L376.0 812.5L377.8 817.9L379.5 815.0L380.7 813.3L381.2 807.7L383.0 792.5L384.0 785.0L384.8 779.5L386.5 767.8L388.2 756.6L390.0 746.5L391.8 735.3L393.5 723.8L395.2 709.3L397.0 698.4L398.8 686.0L400.5 677.6L402.2 664.0L404.0 652.9L405.8 640.5L407.5 630.4L409.2 616.5L411.0 608.1L412.8 594.9L414.5 582.7L416.2 572.3L416.2 571.2L418.0 581.8L419.8 592.0L421.5 601.7L423.2 611.4L425.0 623.3L426.8 632.2L428.5 641.6L430.2 651.7L432.0 663.3L433.8 672.1L435.5 681.9L437.2 692.9L439.0 702.8L440.8 713.6L442.5 723.0L444.2 732.9L446.0 744.8L447.8 752.9L449.5 761.8L451.2 772.2L453.0 782.8L454.8 794.0L456.5 802.8L458.2 813.4L460.0 823.9L461.8 832.6L463.5 845.2L465.2 853.0L465.8 857.0L467.0 864.1L468.8 863.2L470.5 868.5L472.2 874.9L474.0 874.9L475.8 880.9L477.5 884.0L479.2 885.5L481.0 895.6L482.8 902.0L484.5 903.6L486.2 904.5L488.0 912.9L489.8 917.4L491.5 915.0L493.2 921.4L495.0 927.5L496.8 927.7L498.5 937.0L500.2 938.1L500.5 940.2L502.0 970.6L503.0 990.8L503.8 990.8L505.5 990.8L507.2 990.8L509.0 990.8L510.8 990.8L512.5 990.8L514.2 990.8L516.0 990.8L517.8 990.8L519.5 990.8L521.2 990.8L523.0 990.8L524.8 990.8L526.5 990.8L528.2 990.8L530.0 990.8L531.8 990.8L533.5 990.8L535.2 990.8L536.7 990.8L537.0 990.6L538.8 980.8L540.5 970.4L542.2 961.1L544.0 952.5L545.8 945.9L547.5 936.3L549.2 928.7L551.0 920.7L552.8 910.3L554.5 900.0L556.2 891.2L558.0 883.0L559.8 873.2L561.5 867.4L563.2 859.1L565.0 849.1L566.8 841.1L568.5 832.6L570.2 822.9L572.0 813.2L573.8 805.0L575.0 798.7L575.5 800.9L577.2 794.4L579.0 792.5L580.8 798.9L582.5 803.4L584.2 803.8L586.0 793.3L587.8 803.4L589.5 795.1L591.2 796.7L593.0 799.8L594.8 793.7L596.5 803.1L598.2 801.5L600.0 797.5L601.8 802.6L603.5 792.6L605.2 799.8L607.0 800.8L608.8 801.9L610.5 794.6L612.2 796.7L614.0 794.3L615.8 793.9L617.5 791.9L619.2 789.9L621.0 793.2L622.8 799.0L624.5 795.5L626.2 799.0L628.0 800.9L629.8 795.1L631.5 792.1L633.2 798.5L635.0 797.2L636.8 796.2L638.5 791.8L640.2 793.8L642.0 792.5L643.8 790.7L645.5 795.0L647.2 790.0L649.0 788.5L650.8 798.4L652.5 787.9L654.2 790.3L656.0 797.5L657.8 793.4L659.5 791.2L661.2 787.5L663.0 794.0L664.8 791.5L666.5 787.5L668.2 788.4L670.0 786.5L671.5 791.8L671.8 789.8L673.5 774.4L675.2 761.0L677.0 744.4L678.8 729.2L680.5 715.0L682.2 699.9L684.0 686.7L685.8 669.5L687.5 654.4L689.2 639.6L691.0 626.2L692.8 610.5L694.5 597.2L696.2 580.4L698.0 565.7L699.8 552.5L700.9 542.3L701.5 547.3L703.2 556.6L705.0 566.7L706.8 576.5L708.5 587.9L710.2 600.0L712.0 607.9L713.8 620.9L715.5 628.9L717.2 641.5L719.0 651.5L720.8 660.5L722.5 673.1L724.2 683.6L726.0 692.9L727.8 702.7L729.5 712.8L731.2 723.8L733.0 733.5L734.8 745.5L736.5 754.5L738.2 767.9L740.0 777.9L741.8 787.4L743.5 798.7L745.2 807.8L747.0 818.6L748.8 829.5L750.5 838.9L752.2 850.3L754.0 861.7L755.8 871.9L757.5 880.9L757.9 884.5L759.2 884.5L761.0 895.3L762.8 894.2L764.5 897.9L766.2 906.5L768.0 910.7L769.8 918.7L771.5 920.4L773.2 925.3L775.0 929.1L776.8 938.9L778.5 935.1L780.2 943.8L782.0 949.5L783.8 950.6L784.3 954.8L785.5 976.4L786.3 990.8L787.2 990.8L789.0 990.8L790.8 990.8L792.5 990.8L794.2 990.8L796.0 990.8L797.8 990.8L799.5 990.8L801.2 990.8L803.0 990.8L804.8 990.8L806.5 990.8L808.2 990.8L810.0 990.8L811.8 990.8L813.5 990.8L815.2 990.8L817.0 990.8L818.8 990.8L820.1 990.8L820.5 988.7L822.2 981.0L824.0 972.1L825.8 966.8L827.5 956.7L829.2 949.3L831.0 938.8L832.8 930.9L834.5 925.8L836.2 916.9L838.0 910.4L839.8 901.1L841.5 891.3L843.2 882.9L845.0 876.8L846.8 869.5L848.5 862.0L850.2 852.1L852.0 842.7L853.6 837.3L853.8 841.8L855.5 833.8L857.2 843.0L859.0 840.9L860.8 840.5L862.5 834.8L864.2 839.2L866.0 838.7L867.8 835.5L869.5 841.7L871.2 834.0L873.0 841.4L874.8 836.6L876.5 839.8L878.2 840.4L880.0 836.2L881.8 837.3L883.5 838.1L885.2 837.5L887.0 836.1L888.8 840.6L890.5 840.0L892.2 834.7L894.0 834.6L895.8 835.9L897.5 831.9L899.2 834.8L901.0 831.7L902.8 839.3L904.5 833.0L906.2 832.1L908.0 831.0L909.8 838.1L911.5 838.1L913.2 830.6L915.0 839.2L916.8 829.6L918.5 830.9L920.2 840.1L922.0 838.7L923.8 832.7L925.5 838.4L927.2 840.4L929.0 831.3L930.8 836.3L932.5 831.7L934.2 839.8L936.0 836.4L937.8 832.9L939.5 841.0L941.2 838.7L943.0 832.8L944.8 829.9L946.5 829.2L948.2 839.6L950.0 834.8L951.8 831.6L953.5 834.7L954.5 834.7L955.2 828.3L957.0 815.4L957.5 810.7L958.8 803.5L960.5 791.3L962.2 779.4L964.0 765.6L965.8 753.7L967.5 741.4L969.2 730.7L971.0 718.5L972.8 706.4L974.5 692.1L976.2 679.6L978.0 667.7L979.8 658.4L981.5 646.4L983.2 631.3L985.0 620.9L986.8 607.8L988.5 597.2L990.2 584.6L990.9 580.0L992.0 587.1L993.8 598.7L995.5 609.4L997.2 622.7L999.0 631.7L1000.8 642.5L1002.5 656.0L1004.2 666.4L1006.0 676.7L1007.8 689.2L1009.5 701.2L1011.2 712.6L1013.0 722.7L1014.8 735.7L1016.5 744.0L1018.2 755.7L1020.0 767.3L1021.8 778.1L1023.5 790.1L1025.2 802.2L1027.0 812.9L1028.8 824.5L1030.5 834.2L1032.2 846.1L1034.0 859.2L1035.8 868.3L1037.5 880.2L1038.3 886.2L1039.2 886.2L1041.0 890.4L1042.8 898.6L1044.5 898.8L1046.2 903.5L1048.0 909.7L1049.8 913.6L1051.5 918.2L1053.2 926.0L1055.0 927.7L1056.8 938.1L1058.5 940.3L1060.2 943.7L1062.0 952.3L1063.8 953.8L1065.5 955.9L1067.2 960.6L1067.9 963.4L1069.0 990.8L1070.8 990.8L1072.5 990.8L1074.2 990.8L1076.0 990.8L1077.8 990.8L1079.5 990.8L1081.2 990.8L1083.0 990.8L1084.8 990.8L1086.5 990.8L1088.2 990.8L1090.0 990.8L1091.8 990.8L1093.5 990.8L1095.2 990.8L1097.0 990.8L1098.8 990.8L1100.5 990.8L1102.2 990.8L1102.7 990.8L1104.0 985.7L1105.8 973.9L1107.5 966.6L1109.2 959.6L1111.0 949.6L1112.8 941.5L1114.5 933.1L1116.2 925.2L1118.0 913.9L1119.8 907.0L1121.5 898.2L1123.2 889.4L1125.0 879.8L1126.8 875.6L1128.5 864.4L1130.2 855.3L1132.0 848.9L1133.8 839.7L1135.5 832.8L1137.2 823.6L1137.5 821.0L1139.0 822.6L1140.8 826.0L1142.5 824.2L1144.2 816.3L1146.0 820.7L1147.8 821.3L1149.5 815.7L1151.2 820.7L1153.0 815.5L1154.8 819.9L1156.5 817.9L1158.2 827.0L1160.0 820.6L1161.8 818.7L1163.5 827.5L1165.2 816.8L1167.0 826.3L1168.8 822.5L1170.5 826.3L1172.2 822.3L1174.0 821.0L1175.8 827.8L1177.5 817.0L1179.2 823.5L1181.0 822.3L1182.8 821.5L1184.5 824.4L1186.2 825.4L1188.0 821.0L1189.8 822.2L1191.5 825.7L1193.2 820.4L1195.0 825.6L1196.8 829.2L1198.5 826.4L1200.2 828.9L1202.0 827.6L1203.8 820.3L1205.5 824.9L1207.2 818.7L1209.0 820.6L1210.8 829.2L1212.5 817.8L1214.2 818.4L1216.0 829.2L1217.8 819.0L1219.5 824.9L1221.2 824.4L1223.0 818.4L1224.8 827.4L1226.5 824.0L1228.2 819.0L1229.3 824.4L1230.0 817.0L1231.8 800.4L1232.0 797.8L1233.5 784.6L1235.2 771.5L1237.0 758.6L1238.8 746.6L1240.5 731.3L1242.2 718.3L1244.0 705.5L1245.8 692.4L1247.5 677.2L1249.2 664.9L1251.0 650.3L1252.8 635.9L1254.5 623.0L1256.2 610.0L1258.0 595.4L1259.8 582.3L1259.9 580.9L1261.5 589.4L1263.2 600.5L1265.0 609.2L1266.8 619.7L1268.5 630.7L1270.2 642.6L1272.0 653.4L1273.8 661.1L1275.5 671.7L1277.2 682.5L1279.0 693.7L1280.8 704.3L1282.5 713.2L1284.2 723.9L1286.0 734.1L1287.8 744.3L1289.5 754.2L1291.2 766.4L1293.0 776.5L1294.8 784.3L1296.5 794.8L1298.2 805.3L1300.0 818.4L1301.8 828.6L1303.5 838.2L1305.2 848.0L1307.0 857.6L1308.8 869.6L1310.5 878.5L1312.2 890.3L1314.0 900.6L1314.7 903.3L1315.8 904.7L1317.5 910.2L1319.2 914.1L1321.0 920.6L1322.8 924.3L1324.5 930.9L1326.2 934.4L1328.0 935.8L1329.8 939.6L1331.5 950.1L1333.2 954.3L1335.0 953.4L1336.8 959.4L1338.5 962.8L1340.2 971.7L1342.0 974.6L1343.8 980.4L1345.5 980.6L1347.2 988.6L1348.5 990.8L1349.0 990.8L1350.8 990.8L1352.5 990.8L1354.2 990.8L1356.0 990.8L1357.8 990.8L1359.5 990.8L1361.2 990.8L1363.0 990.8L1364.8 990.8L1366.5 990.8L1368.2 990.8L1370.0 990.8L1371.8 990.8L1373.5 990.8L1375.2 990.8L1377.0 990.8L1378.8 990.8L1380.5 990.8L1382.2 990.8L1384.0 990.8L1385.6 990.8L1385.8 989.4L1387.5 979.4L1389.2 973.9L1391.0 964.5L1392.8 955.2L1394.5 945.9L1396.2 939.7L1398.0 931.5L1399.8 924.2L1401.5 912.3L1403.2 907.4L1405.0 898.9L1406.8 888.4L1408.5 880.3L1410.2 870.9L1412.0 864.2L1413.8 853.6L1415.5 848.3L1417.2 839.2L1419.0 828.7L1420.8 822.9L1422.5 813.4L1424.2 803.1L1426.0 794.8L1427.5 788.4L1427.8 791.1L1429.5 792.9L1431.2 790.4L1433.0 786.0L1434.8 790.5L1436.5 793.7L1438.2 786.6L1440.0 788.4L1441.8 784.2L1443.5 784.1L1445.2 784.5L1447.0 790.5L1448.8 786.1L1450.5 792.4L1452.2 792.3L1454.0 791.4L1455.8 785.0L1457.5 785.6L1459.2 793.6L1461.0 792.4L1462.8 792.4L1464.5 792.6L1466.2 792.3L1468.0 792.5L1469.8 795.0L1471.5 790.6L1473.2 787.9L1475.0 791.1L1476.8 787.6L1478.5 791.1L1480.2 795.9L1482.0 788.9L1483.8 787.5L1485.5 795.0L1487.2 798.3L1489.0 792.4L1490.8 792.2L1492.5 792.0L1494.2 787.2L1496.0 791.2L1497.8 789.4L1499.5 798.6L1501.2 792.8L1503.0 790.0L1504.8 798.7L1506.5 798.9L1508.2 791.0L1510.0 789.1L1511.8 799.2L1513.5 792.6L1515.2 798.7L1516.1 794.4L1517.0 785.6L1518.8 769.8L1519.0 767.8L1520.5 757.5L1522.2 744.5L1524.0 729.6L1525.8 717.4L1527.5 703.5L1529.2 691.7L1531.0 678.8L1532.8 663.7L1534.5 651.6L1536.2 639.1L1538.0 625.9L1539.8 612.3L1541.5 599.2L1543.2 585.5L1545.0 574.1L1546.7 561.1L1546.8 560.3L1548.5 570.6L1550.2 579.7L1552.0 589.6L1553.8 599.2L1555.5 608.7L1557.2 618.2L1559.0 629.0L1560.8 639.1L1562.5 648.2L1564.2 657.6L1566.0 668.6L1567.8 678.3L1569.5 689.0L1571.2 696.7L1573.0 705.6L1574.8 717.4L1576.5 727.8L1578.2 737.4L1580.0 746.3L1581.8 756.5L1583.5 764.0L1585.2 776.7L1587.0 785.6L1588.8 796.0L1590.5 803.9L1592.2 813.2L1594.0 824.9L1595.8 835.0L1597.5 843.4L1599.2 852.7L1601.0 861.4L1602.8 874.0L1604.5 883.5L1606.2 892.9L1608.0 901.6L1609.8 908.2L1611.5 912.1L1613.2 911.9L1615.0 917.1L1616.8 924.5L1618.5 928.9L1620.2 932.2L1622.0 937.2L1623.8 936.1L1625.5 944.2L1627.2 946.1L1629.0 947.8L1630.8 954.9L1632.5 961.0L1633.7 961.6L1634.2 971.7L1635.3 990.8L1636.0 990.8L1637.8 990.8L1639.5 990.8L1641.2 990.8L1643.0 990.8L1644.8 990.8L1646.5 990.8L1648.2 990.8L1650.0 990.8L1651.8 990.8L1653.5 990.8L1655.2 990.8L1657.0 990.8L1658.8 990.8L1660.5 990.8L1662.2 990.8L1664.0 990.8L1665.8 990.8L1667.5 990.8L1669.2 990.8L1669.2 988.8L1671.0 979.4L1672.8 972.6L1674.5 962.3L1676.2 951.2L1678.0 944.0L1679.8 935.8L1681.5 927.3L1683.2 913.9L1685.0 905.3L1686.8 897.8L1688.5 887.8L1690.2 878.6L1692.0 870.3L1693.8 857.8L1695.5 850.0L1697.2 842.5L1699.0 834.2L1700.8 822.8L1702.5 813.9L1703.0 810.7L1704.2 807.1L1706.0 808.3L1707.8 809.7L1709.5 815.3L1711.2 815.4L1713.0 813.5L1714.8 814.4L1716.5 807.0L1718.2 811.4L1720.0 810.0L1721.8 805.8L1723.5 814.8L1725.2 811.6L1727.0 816.4L1728.8 808.9L1730.5 818.5L1732.2 808.5L1734.0 808.3L1735.8 808.7L1737.5 817.9L1739.2 815.7L1741.0 810.3L1742.8 818.0L1744.5 813.4L1746.2 813.7L1748.0 807.8L1749.8 812.5L1751.5 809.2L1753.2 816.1L1755.0 810.3L1756.8 815.0L1758.5 808.9L1760.0 814.1" fill="none" stroke="#ffa93e" stroke-width="1.8" stroke-linejoin="round"/><path d="M82.2 12.8V462.9M70.2 461.9H82.2M70.2 367.0H82.2M70.2 272.1H82.2M70.2 177.2H82.2M70.2 82.3H82.2M70.2 13.0H82.2" fill="none" stroke="#2f890e" stroke-width="1.8"/><path d="M82.2 541.3V991.8M70.2 990.8H82.2M70.2 905.0H82.2M70.2 819.3H82.2M70.2 733.5H82.2M70.2 647.8H82.2M70.2 562.0H82.2M70.2 542.3H82.2" fill="none" stroke="#f3ad55" stroke-width="1.7"/><path d="M81.6 999.2H1760M82.6 999.2V1006.6M221.0 999.2V1006.6M430.7 999.2V1006.6M640.4 999.2V1006.6M850.2 999.2V1006.6M1059.9 999.2V1006.6M1269.6 999.2V1006.6M1479.3 999.2V1006.6M1689.0 999.2V1006.6M1759.0 999.2V1006.6" fill="none" stroke="#111" stroke-width="2.2"/></svg>
<span class="t" style="left:951.7px;top:791.3px;font-size:20px;color:#222;">0</span>
<span class="t" style="left:941.0px;top:696.4px;font-size:20px;color:#222;letter-spacing:-0.44px;">10</span>
<span class="t" style="left:941.0px;top:601.5px;font-size:20px;color:#222;letter-spacing:-0.44px;">20</span>
<span class="t" style="left:941.0px;top:506.6px;font-size:20px;color:#222;letter-spacing:-0.44px;">30</span>
<span class="t" style="left:941.0px;top:411.7px;font-size:20px;color:#222;letter-spacing:-0.44px;">40</span>
<span class="t" style="left:924.7px;top:342.4px;font-size:20px;color:#222;letter-spacing:-0.26px;">47.3</span>
<span class="t" style="left:951.7px;top:1320.2px;font-size:20px;color:#222;">0</span>
<span class="t" style="left:941.0px;top:1234.4px;font-size:20px;color:#222;letter-spacing:-0.44px;">10</span>
<span class="t" style="left:941.0px;top:1148.6px;font-size:20px;color:#222;letter-spacing:-0.44px;">20</span>
<span class="t" style="left:941.0px;top:1062.9px;font-size:20px;color:#222;letter-spacing:-0.44px;">30</span>
<span class="t" style="left:941.0px;top:977.1px;font-size:20px;color:#222;letter-spacing:-0.44px;">40</span>
<span class="t" style="left:941.0px;top:891.4px;font-size:20px;color:#222;letter-spacing:-0.44px;">50</span>
<span class="t" style="left:924.7px;top:871.6px;font-size:20px;color:#222;letter-spacing:-0.26px;">52.3</span>
<span class="t" style="left:1095.6px;top:1350.4px;font-size:20px;color:#222;letter-spacing:0.19px;">20:00</span>
<span class="t" style="left:1305.3px;top:1350.4px;font-size:20px;color:#222;letter-spacing:0.19px;">21:00</span>
<span class="t" style="left:1515.0px;top:1350.4px;font-size:20px;color:#222;letter-spacing:0.19px;">22:00</span>
<span class="t" style="left:1724.8px;top:1350.4px;font-size:20px;color:#222;letter-spacing:0.19px;">23:00</span>
<span class="t" style="left:1925.8px;top:1350.4px;font-size:20px;color:#222;letter-spacing:0.17px;">Tue, 14</span>
<span class="t" style="left:2144.2px;top:1350.4px;font-size:20px;color:#222;letter-spacing:0.19px;">01:00</span>
<span class="t" style="left:2353.9px;top:1350.4px;font-size:20px;color:#222;letter-spacing:0.19px;">02:00</span>
<span class="t" style="left:2563.6px;top:1350.4px;font-size:20px;color:#222;letter-spacing:0.19px;">03:00</span>
<div class="btn" style="left:982.5px;top:1388.2px;width:62.9px;height:62.4px;"></div>
<svg class="b" style="left:1007.5px;top:1412.0px;" width="11" height="15" viewBox="0 0 11 15"><path d="M9.6 0.8V13.8L1 7.3z" fill="#444"/></svg>
<div class="btn" style="left:1055.1px;top:1388.2px;width:251.5px;height:62.4px;"></div>
<span class="t" style="left:1081.7px;top:1405.8px;font-size:28px;color:#1b1c20;letter-spacing:1.53px;">13/05/2024</span>
<svg class="b" style="left:1260.4px;top:1403.0px;" width="30" height="31" viewBox="0 0 30 31"><rect x="1.3" y="4.4" width="27" height="24.6" rx="2.4" fill="none" stroke="#a6a6a6" stroke-width="2.2"/><path d="M1.3 10.8H28.3" stroke="#a6a6a6" stroke-width="2"/><rect x="6.4" y="0.6" width="3.4" height="5.6" fill="#a6a6a6"/><rect x="20" y="0.6" width="3.4" height="5.6" fill="#a6a6a6"/><rect x="16.6" y="17.6" width="7.6" height="7.4" fill="#a6a6a6"/></svg>
<div class="btn" style="left:1316.3px;top:1388.2px;width:280.0px;height:62.4px;"></div>
<span class="t" style="left:1342.5px;top:1405.8px;font-size:28px;color:#1b1c20;letter-spacing:0.23px;">19:20:04</span>
<svg class="b" style="left:1549.0px;top:1404.2px;" width="30" height="30" viewBox="0 0 30 30"><circle cx="15" cy="15" r="12.6" fill="none" stroke="#a6a6a6" stroke-width="2.2"/><path d="M15 7.4V15.6H21.6" fill="none" stroke="#a6a6a6" stroke-width="2.2"/></svg>
<div class="btn" style="left:1644.2px;top:1388.2px;width:62.8px;height:62.4px;"></div>
<svg class="b" style="left:1659.0px;top:1402.5px;" width="34" height="34" viewBox="0 0 34 34"><path d="M1.3 1V32.2H32.2" fill="none" stroke="#555" stroke-width="1.5"/><path d="M1.6 15.8H29" fill="none" stroke="#555" stroke-width="1.3"/><path d="M2.6 29.8H8.4V26H13.8V22.6H19V19.4H26.6" fill="none" stroke="#555" stroke-width="1.5"/><path d="M3.2 14.6C5 10.6 8 9.4 12 8.8C17 8.2 20.6 8.2 25.6 4.2" fill="none" stroke="#4a4a4a" stroke-width="2.8" stroke-linecap="round"/></svg>
<div class="btn" style="left:1716.3px;top:1388.2px;width:206.7px;height:62.4px;"></div>
<div class="b" style="left:1859.4px;top:1388.2px;width:1.8px;height:62.4px;background:#efefef"></div>
<span class="t" style="left:1742.5px;top:1405.8px;font-size:28px;color:#1b1c20;letter-spacing:-0.22px;">8 hours</span>
<svg class="b" style="left:1880.2px;top:1403.5px;" width="24" height="30" viewBox="0 0 24 30"><rect x="2.2" y="12" width="18" height="15.4" rx="1.6" fill="none" stroke="#444" stroke-width="2.5"/><path d="M5.8 12V7A5.4 5.4 0 0 1 16.6 7V8.4" fill="none" stroke="#444" stroke-width="2.5"/><circle cx="11.2" cy="19.8" r="2.5" fill="#444"/></svg>
<svg class="b" style="left:1949.0px;top:1404.5px;" width="30" height="30" viewBox="0 0 30 30"><path d="M5.8 15A11 11 0 1 1 9.4 23.2" fill="none" stroke="#dedede" stroke-width="2.4"/><path d="M1 12.6L5.8 17.8L10.8 12.6z" fill="#dedede"/><path d="M16.6 8.6V15.6L21.6 18.6" fill="none" stroke="#dedede" stroke-width="2.2"/></svg>
<div class="btn" style="left:2043.4px;top:1388.2px;width:251.7px;height:62.4px;"></div>
<span class="t" style="left:2069.9px;top:1405.8px;font-size:28px;color:#1b1c20;letter-spacing:1.54px;">14/05/2024</span>
<svg class="b" style="left:2248.6px;top:1403.0px;" width="30" height="31" viewBox="0 0 30 31"><rect x="1.3" y="4.4" width="27" height="24.6" rx="2.4" fill="none" stroke="#a6a6a6" stroke-width="2.2"/><path d="M1.3 10.8H28.3" stroke="#a6a6a6" stroke-width="2"/><rect x="6.4" y="0.6" width="3.4" height="5.6" fill="#a6a6a6"/><rect x="20" y="0.6" width="3.4" height="5.6" fill="#a6a6a6"/><rect x="16.6" y="17.6" width="7.6" height="7.4" fill="#a6a6a6"/></svg>
<div class="btn" style="left:2304.4px;top:1388.2px;width:280.4px;height:62.4px;"></div>
<span class="t" style="left:2330.2px;top:1405.8px;font-size:28px;color:#1b1c20;letter-spacing:0.20px;">03:20:04</span>
<svg class="b" style="left:2537.5px;top:1404.2px;" width="30" height="30" viewBox="0 0 30 30"><circle cx="15" cy="15" r="12.6" fill="none" stroke="#a6a6a6" stroke-width="2.2"/><path d="M15 7.4V15.6H21.6" fill="none" stroke="#a6a6a6" stroke-width="2.2"/></svg>
<div class="btn" style="left:2594.1px;top:1388.2px;width:62.7px;height:62.4px;"></div>
<svg class="b" style="left:2620.0px;top:1412.0px;" width="11" height="15" viewBox="0 0 11 15"><path d="M1.4 0.8V13.8L10 7.3z" fill="#444"/></svg>
<svg class="b" style="left:980.0px;top:1460.0px;" width="1680" height="110" viewBox="0 0 1680 110"><path d="M2.5 8H1677" stroke="#ececec" stroke-width="1.6"/><path d="M2.5 65.3L8.5 10.8L9.0 22.0L10.0 66.4L14.5 14.1L14.8 25.3L15.6 66.0L24.4 11.0L25.0 22.2L26.6 65.4L38.4 15.8L39.3 27.0L41.4 65.3L49.1 16.1L49.6 27.3L51.0 64.8L58.0 9.4L58.5 20.6L59.7 64.6L66.2 9.1L66.7 20.3L67.8 64.9L76.3 16.2L76.9 27.4L78.4 65.5L86.9 15.5L87.6 26.7L89.0 66.2L94.4 9.6L94.8 20.8L95.7 65.1L101.5 12.5L101.9 23.7L102.9 65.7L109.9 12.1L110.4 23.3L111.6 65.0L120.1 16.4L120.7 27.6L122.2 65.0L127.3 17.1L127.7 28.3L128.6 64.5L135.5 16.9L136.0 28.1L137.3 64.6L144.2 10.6L144.7 21.8L145.9 64.6L160.1 9.4L161.2 20.6L163.7 66.2L169.3 12.3L169.8 23.5L170.8 66.4L182.9 16.2L183.8 27.4L186.0 64.5L194.7 11.6L195.3 22.8L196.9 65.8L201.6 17.2L201.9 28.4L202.8 66.1L209.0 9.1L209.4 20.3L210.5 66.4L218.7 10.1L219.4 21.3L220.8 64.5L226.9 16.9L227.3 28.1L228.4 65.1L235.4 13.2L235.9 24.4L237.1 64.4L243.8 14.0L244.3 25.2L245.4 66.0L251.2 14.9L251.6 26.1L252.6 65.3L257.0 13.2L257.4 24.4L258.2 66.5L265.3 13.7L265.8 24.9L267.0 65.1L273.5 9.3L274.0 20.5L275.1 64.9L284.6 11.8L285.4 23.0L287.0 64.3L292.5 14.5L292.9 25.7L293.9 65.8L299.9 13.8L300.4 25.0L301.4 65.2L307.1 11.9L307.6 23.1L308.6 66.4L315.5 15.3L316.0 26.5L317.2 66.0L325.1 11.4L325.7 22.6L327.1 65.5L337.7 10.4L338.5 21.6L340.4 64.6L346.7 11.6L347.2 22.8L348.3 65.7L355.6 10.2L356.1 21.4L357.4 66.0L362.3 12.6L362.7 23.8L363.5 64.7L374.6 10.4L375.4 21.6L377.3 65.1L385.3 15.6L385.9 26.8L387.3 65.8L395.1 9.9L395.7 21.1L397.1 65.6L403.4 11.7L403.8 22.9L404.9 66.2L409.4 16.6L409.7 27.8L410.5 64.3L416.8 16.2L417.2 27.4L418.3 66.0L426.0 16.6L426.6 27.8L427.9 65.3L433.6 14.4L434.0 25.6L435.0 66.3L442.0 10.7L442.6 21.9L443.8 66.4L452.1 15.6L452.8 26.8L454.2 64.5L462.6 16.6L463.2 27.8L464.7 64.8L469.8 8.9L470.2 20.1L471.1 65.3L477.4 14.4L477.8 25.6L478.9 65.7L484.4 14.0L484.8 25.2L485.8 64.7L495.9 12.8L496.7 24.0L498.4 66.1L506.3 15.7L506.9 26.9L508.3 64.7L512.7 15.6L513.1 26.8L513.8 66.4L519.4 16.1L519.9 27.3L520.8 65.6L527.3 13.2L527.8 24.4L528.9 66.4L535.8 8.8L536.3 20.0L537.5 64.6L542.3 17.0L542.7 28.2L543.5 65.8L549.5 11.5L549.9 22.7L550.9 65.7L556.2 13.7L556.6 24.9L557.5 65.3L565.0 9.9L565.6 21.1L566.9 66.1L573.0 9.5L573.4 20.7L574.5 65.6L582.4 15.4L583.0 26.6L584.4 65.7L591.0 12.4L591.5 23.6L592.6 64.9L599.1 12.4L599.5 23.6L600.7 64.9L605.4 13.3L605.7 24.5L606.6 64.5L615.1 12.4L615.7 23.6L617.2 64.7L622.8 16.4L623.2 27.6L624.1 64.7L631.5 9.9L632.0 21.1L633.3 65.0L640.9 15.5L641.5 26.7L642.8 65.2L652.6 9.7L653.3 20.9L655.0 66.3L659.8 9.2L660.2 20.4L661.0 66.4L674.8 10.3L675.8 21.5L678.2 64.6L686.8 14.5L687.5 25.7L689.0 66.4L696.7 15.5L697.3 26.7L698.7 66.3L706.4 14.8L707.0 26.0L708.3 65.8L715.2 9.3L715.7 20.5L716.9 66.1L722.4 10.9L722.8 22.1L723.8 65.6L729.8 15.1L730.3 26.3L731.3 65.6L736.1 11.8L736.4 23.0L737.3 65.6L749.9 17.0L750.8 28.2L753.0 65.0L759.7 15.2L760.2 26.4L761.4 64.5L771.6 14.2L772.4 25.4L774.2 65.3L780.5 16.5L781.0 27.7L782.1 65.9L787.4 10.4L787.8 21.6L788.7 66.0L796.2 11.5L796.7 22.7L798.0 64.9L804.2 11.3L804.7 22.5L805.8 65.9L815.0 13.7L815.7 24.9L817.4 66.1L823.3 12.0L823.8 23.2L824.8 66.2L833.6 15.3L834.3 26.5L835.8 65.5L843.9 13.9L844.5 25.1L845.9 65.4L853.5 13.5L854.0 24.7L855.3 64.9L864.0 12.2L864.6 23.4L866.1 66.0L873.7 10.7L874.3 21.9L875.6 64.6L883.9 16.9L884.5 28.1L886.0 64.9L894.1 10.4L894.8 21.6L896.2 64.6L902.0 11.0L902.4 22.2L903.4 66.3L908.2 14.9L908.6 26.1L909.4 65.7L916.4 11.3L916.9 22.5L918.1 65.8L924.4 8.9L924.9 20.1L926.0 65.2L934.6 10.6L935.3 21.8L936.8 66.2L942.4 13.4L942.8 24.6L943.8 64.5L958.3 9.8L959.4 21.0L961.9 64.8L969.6 12.0L970.2 23.2L971.6 65.0L979.5 14.5L980.1 25.7L981.5 64.3L988.9 15.2L989.4 26.4L990.7 65.4L996.7 9.8L997.1 21.0L998.2 65.2L1003.4 14.5L1003.7 25.7L1004.7 66.1L1013.0 14.1L1013.6 25.3L1015.0 64.4L1020.1 9.9L1020.4 21.1L1021.3 65.2L1028.2 14.9L1028.7 26.1L1029.9 65.8L1040.1 12.7L1040.9 23.9L1042.6 65.3L1050.3 15.2L1050.9 26.4L1052.2 65.6L1064.5 11.1L1065.4 22.3L1067.5 64.8L1073.5 10.9L1073.9 22.1L1075.0 65.3L1082.8 12.2L1083.4 23.4L1084.7 66.2L1092.5 15.9L1093.0 27.1L1094.4 64.9L1103.2 15.4L1103.9 26.6L1105.4 64.7L1113.1 15.1L1113.7 26.3L1115.0 65.6L1120.3 10.1L1120.7 21.3L1121.6 66.0L1127.1 13.6L1127.5 24.8L1128.5 64.7L1136.8 9.1L1137.4 20.3L1138.9 65.3L1145.8 12.0L1146.4 23.2L1147.6 65.0L1153.3 17.0L1153.7 28.2L1154.7 65.2L1167.6 12.9L1168.6 24.1L1170.8 65.4L1177.5 14.4L1178.1 25.6L1179.2 65.3L1183.8 10.4L1184.1 21.6L1184.9 65.5L1191.8 14.2L1192.3 25.4L1193.5 66.2L1201.4 16.3L1202.0 27.5L1203.4 65.7L1213.0 9.2L1213.7 20.4L1215.4 65.8L1223.6 16.6L1224.3 27.8L1225.7 64.6L1232.8 9.9L1233.3 21.1L1234.5 64.8L1240.4 14.8L1240.9 26.0L1241.9 64.6L1248.2 16.6L1248.7 27.8L1249.8 66.3L1257.0 12.9L1257.5 24.1L1258.7 65.4L1266.2 10.2L1266.8 21.4L1268.1 65.0L1273.8 12.4L1274.3 23.6L1275.3 65.6L1280.5 15.2L1280.8 26.4L1281.8 65.7L1287.8 14.9L1288.2 26.1L1289.3 66.0L1293.7 13.8L1294.0 25.0L1294.8 66.2L1303.8 15.4L1304.5 26.6L1306.1 65.6L1313.4 10.3L1313.9 21.5L1315.2 65.4L1323.6 10.2L1324.2 21.4L1325.7 64.9L1330.3 12.2L1330.7 23.4L1331.5 66.4L1340.1 12.2L1340.8 23.4L1342.3 65.4L1347.4 9.6L1347.8 20.8L1348.7 66.2L1353.3 11.7L1353.7 22.9L1354.5 64.7L1360.9 11.1L1361.4 22.3L1362.5 65.9L1368.1 11.3L1368.5 22.5L1369.5 65.7L1374.3 14.1L1374.7 25.3L1375.5 65.2L1382.0 17.0L1382.5 28.2L1383.6 66.4L1388.2 10.3L1388.6 21.5L1389.4 66.1L1398.1 16.4L1398.7 27.6L1400.2 64.4L1411.8 15.6L1412.7 26.8L1414.7 64.4L1419.5 13.9L1419.9 25.1L1420.7 66.2L1426.8 16.0L1427.3 27.2L1428.4 64.4L1433.5 14.5L1433.9 25.7L1434.8 64.6L1441.7 15.0L1442.2 26.2L1443.4 65.6L1448.8 11.9L1449.2 23.1L1450.1 65.9L1455.3 12.9L1455.7 24.1L1456.6 64.9L1462.7 13.9L1463.1 25.1L1464.2 64.9L1468.7 10.1L1469.0 21.3L1469.8 65.0L1474.6 15.2L1475.0 26.4L1475.8 65.1L1484.1 15.9L1484.7 27.1L1486.2 64.5L1493.8 12.6L1494.4 23.8L1495.7 66.3L1501.9 11.9L1502.3 23.1L1503.4 65.2L1513.0 9.7L1513.7 20.9L1515.4 66.4L1520.5 10.8L1520.9 22.0L1521.7 66.5L1527.2 13.7L1527.6 24.9L1528.5 65.2L1534.8 10.7L1535.2 21.9L1536.3 64.7L1545.5 13.9L1546.2 25.1L1547.8 64.7L1559.0 9.5L1559.8 20.7L1561.7 64.5L1566.5 10.5L1566.9 21.7L1567.7 64.6L1574.8 10.7L1575.4 21.9L1576.6 64.5L1582.5 15.2L1583.0 26.4L1584.0 66.3L1592.1 12.6L1592.7 23.8L1594.1 66.0L1600.9 15.7L1601.4 26.9L1602.6 66.3L1608.5 14.9L1608.9 26.1L1610.0 65.3L1617.6 9.4L1618.2 20.6L1619.5 65.1L1624.9 14.3L1625.3 25.5L1626.2 65.7L1635.1 17.2L1635.8 28.4L1637.4 64.4L1645.0 10.2L1645.5 21.4L1646.9 65.1L1655.4 17.1L1656.0 28.3L1657.5 64.4L1665.9 12.3L1666.5 23.5L1668.0 64.8L1674.1 12.9L1674.6 24.1" fill="none" stroke="#6fae52" stroke-width="1.25" stroke-linejoin="round"/><path d="M2.5 66.0L5.1 18.7L9.7 66.0L11.8 17.0L15.6 66.0L18.1 17.2L21.1 66.0L23.0 17.2L25.7 66.2L29.0 11.2L32.3 65.0L34.4 19.3L37.7 65.6L40.5 14.6L43.6 65.7L46.4 13.1L50.7 65.1L52.5 12.7L54.9 66.2L56.9 15.3L59.3 64.9L61.6 14.7L66.0 66.5L68.0 12.2L71.6 66.3L74.0 15.4L76.8 66.1L78.7 14.2L81.1 65.0L83.6 16.6L87.9 65.2L90.4 17.3L93.7 66.2L95.8 13.0L98.0 65.7L101.0 18.6L104.3 65.8L106.5 15.9L110.2 64.8L112.6 16.6L116.1 65.2L118.2 14.6L121.8 65.6L124.4 13.3L127.3 65.5L129.1 18.8L131.6 66.0L133.9 14.9L138.0 65.9L140.9 16.5L143.9 66.2L146.8 16.3L151.0 66.0L153.5 17.9L156.1 65.8L158.1 13.3L161.2 66.4L163.0 19.3L166.1 65.3L169.4 15.2L173.0 66.0L176.7 10.5L181.8 65.6L184.0 12.9L186.2 65.0L188.3 11.8L191.0 66.3L192.6 16.3L195.3 65.1L199.6 12.2L205.3 66.3L207.4 13.9L210.7 66.3L212.9 11.7L215.3 66.2L218.9 11.2L222.5 65.9L225.8 12.7L229.8 66.5L232.2 13.3L235.1 65.7L237.6 15.6L241.0 66.2L243.9 18.0L247.1 64.9L249.8 12.1L254.0 66.4L257.5 12.3L261.3 66.5L264.8 11.5L268.3 65.6L271.9 16.6L277.0 65.5L279.1 11.8L282.2 65.9L285.3 13.4L288.4 65.1L290.4 18.2L293.5 65.7L296.4 11.6L300.0 64.9L302.5 13.0L305.7 64.8L308.3 18.3L311.6 65.8L314.1 11.1L318.5 65.9L321.3 18.2L325.8 65.0L328.4 15.4L331.4 66.0L333.8 13.7L337.2 65.0L339.5 16.3L343.3 65.5L345.8 13.8L349.6 65.6L352.9 10.8L356.7 65.1L360.0 17.9L363.9 65.0L366.5 11.6L369.3 66.2L371.7 13.1L376.1 65.9L377.7 10.8L380.3 65.8L382.9 13.0L386.2 65.8L388.2 16.4L390.7 65.8L393.0 11.2L397.3 65.7L399.9 10.6L402.8 65.8L405.1 13.5L408.9 66.4L412.8 14.0L418.0 66.4L420.4 15.6L423.0 66.0L426.1 15.3L430.3 66.0L433.3 12.3L437.4 65.9L440.6 16.1L444.0 66.2L445.8 17.1L448.4 65.0L450.8 12.2L453.3 65.0L455.4 11.6L458.8 65.7L461.4 10.8L464.2 65.8L466.3 11.0L469.7 65.3L471.7 12.9L475.0 65.6L476.9 14.5L479.9 65.5L481.9 16.5L484.7 65.5L486.9 15.3L490.9 65.1L493.2 17.5L496.7 65.3L499.1 18.6L501.6 64.8L504.2 13.6L507.3 65.3L509.9 13.5L513.4 65.7L515.9 18.1L519.3 65.5L521.8 14.9L526.2 65.6L528.7 17.3L531.3 64.8L534.0 15.4L538.2 65.4L541.0 10.6L544.8 66.1L547.4 15.6L551.2 65.6L553.2 11.5L556.4 66.2L558.4 14.0L561.9 65.7L563.7 11.0L566.8 65.6L569.8 11.4L573.9 66.4L576.4 14.1L579.0 64.9L581.2 11.6L584.7 66.2L587.0 19.1L590.8 64.8L594.0 12.5L597.5 65.3L600.3 11.4L604.1 66.0L607.1 19.2L610.7 65.6L613.2 12.9L616.1 65.3L618.3 15.0L621.7 65.5L624.7 15.4L628.5 65.2L631.3 12.4L634.3 65.9L636.3 17.0L638.6 66.2L640.8 18.8L643.3 65.3L645.5 14.8L648.0 66.2L650.3 15.9L652.7 66.5L654.5 11.7L657.1 64.8L659.9 14.6L663.3 66.0L665.6 10.5L669.7 65.9L673.2 15.1L677.0 65.1L679.3 14.0L682.6 65.7L685.2 12.5L689.4 66.3L691.7 14.2L694.6 66.0L696.9 15.9L700.6 66.1L703.6 15.6L707.2 65.6L709.2 17.1L712.8 65.7L714.8 17.6L717.3 65.8L719.0 16.1L721.9 64.8L723.8 13.8L726.5 64.9L729.1 12.7L734.0 65.0L737.7 16.8L743.4 66.0L745.7 14.7L748.6 64.9L750.2 11.3L752.9 65.2L755.4 11.2L758.8 66.4L762.0 16.1L765.2 66.4L767.8 10.6L771.5 65.6L773.9 16.9L777.0 66.0L779.8 10.8L783.6 65.9L786.7 12.8L789.8 66.2L792.8 14.8L796.6 66.1L799.2 16.0L802.7 65.0L805.2 12.8L808.7 65.3L811.8 10.9L815.4 66.1L817.5 12.9L820.3 65.3L822.2 16.3L824.8 65.7L827.1 13.9L830.4 65.3L833.8 16.3L837.5 65.3L840.9 17.7L844.9 66.3L847.3 18.6L851.0 65.0L853.1 18.2L856.6 65.8L859.1 17.9L861.8 66.5L864.7 12.8L869.0 66.0L870.7 19.2L873.5 64.9L875.5 12.5L878.4 66.1L880.8 13.2L884.3 66.0L887.5 15.0L891.2 66.4L893.1 17.8L896.2 65.0L898.8 19.2L903.4 66.4L906.1 14.3L910.4 66.2L913.7 19.0L917.6 65.0L920.1 11.5L923.1 66.1L924.7 15.8L927.7 65.9L929.4 18.3L932.4 65.6L934.6 13.3L937.9 65.2L940.3 14.9L943.5 66.2L946.3 11.6L950.4 65.1L952.6 15.1L955.8 65.6L958.2 10.6L961.6 65.3L963.3 14.7L966.4 66.2L968.8 18.3L973.1 65.1L976.5 15.3L980.0 65.9L981.9 11.0L984.6 65.2L988.1 17.2L992.0 66.4L995.9 15.4L1000.2 65.4L1002.1 13.0L1004.5 65.6L1007.7 10.8L1011.7 65.5L1014.0 17.2L1018.3 65.6L1021.5 12.2L1025.6 65.1L1028.2 11.6L1031.2 65.3L1033.9 11.7L1038.0 66.2L1040.9 12.6L1045.1 65.3L1047.5 15.2L1050.3 66.0L1052.3 17.5L1054.7 65.8L1057.5 15.8L1062.0 65.9L1065.0 11.4L1068.1 65.7L1070.9 16.3L1074.4 65.6L1076.6 14.9L1080.2 66.0L1083.9 17.5L1089.1 66.2L1091.3 16.9L1094.1 66.5L1096.5 15.7L1098.9 65.5L1101.3 14.6L1104.0 66.5L1106.0 16.5L1109.6 66.0L1111.9 17.6L1114.8 65.1L1116.9 14.9L1120.6 65.9L1122.7 15.5L1126.6 66.2L1128.5 10.8L1131.1 65.3L1134.4 12.6L1139.8 66.3L1142.2 19.4L1144.9 65.5L1147.0 17.8L1149.6 65.0L1152.7 11.0L1156.5 64.9L1158.3 16.0L1161.5 65.2L1163.4 12.1L1166.0 65.2L1168.3 18.4L1172.4 65.9L1175.1 12.9L1178.0 64.9L1180.7 17.1L1184.4 65.1L1186.8 17.2L1189.8 65.0L1191.6 12.5L1194.0 65.5L1196.8 12.2L1199.7 65.0L1203.1 15.8L1206.8 64.8L1209.3 18.0L1213.4 66.1L1216.5 16.3L1220.0 66.0L1222.9 13.7L1227.1 65.8L1229.6 15.5L1233.4 65.0L1235.9 19.3L1240.0 65.1L1242.9 17.1L1246.3 65.9L1249.0 15.2L1252.4 64.8L1254.6 17.2L1256.9 65.5L1261.1 16.4L1266.4 66.0L1269.1 15.7L1272.6 64.9L1275.8 12.8L1279.4 65.6L1281.6 13.9L1284.1 66.4L1287.9 17.3L1293.1 65.8L1295.9 11.0L1300.1 65.9L1302.7 17.8L1307.2 66.4L1309.0 19.2L1312.2 65.1L1315.0 15.4L1318.3 65.5L1320.8 17.9L1324.5 64.9L1326.1 19.4L1328.7 66.2L1330.5 17.6L1333.4 65.7L1336.1 19.3L1340.5 65.8L1343.7 17.5L1347.8 65.1L1349.6 13.2L1352.6 65.0L1354.9 13.6L1358.4 66.0L1362.8 16.3L1368.2 65.9L1370.2 17.9L1372.6 66.3L1375.9 10.7L1379.4 65.6L1382.4 18.0L1386.4 66.5L1388.2 14.3L1390.8 64.9L1393.8 11.6L1396.9 65.0L1399.6 12.5L1404.1 65.0L1407.1 17.7L1410.9 66.1L1412.9 11.5L1416.4 66.4L1419.9 18.8L1423.7 64.9L1426.0 17.8L1429.5 66.3L1432.0 18.0L1436.5 66.0L1438.0 18.9L1440.9 65.3L1444.4 13.0L1448.3 65.3L1450.3 17.9L1453.7 66.2L1456.6 15.4L1460.3 65.4L1462.4 15.4L1465.0 65.4L1468.6 12.4L1472.2 64.9L1474.9 16.0L1478.1 65.6L1480.8 12.2L1484.2 65.2L1487.3 18.6L1491.0 64.9L1493.1 16.1L1495.2 65.3L1497.7 13.8L1501.3 64.8L1503.6 15.5L1507.2 65.5L1509.6 16.9L1513.8 65.5L1515.6 19.2L1518.8 65.1L1521.2 12.6L1525.3 65.9L1527.6 11.5L1531.1 65.5L1532.9 17.1L1536.2 66.2L1538.0 15.8L1540.5 65.9L1543.2 16.0L1547.7 64.9L1549.8 10.5L1553.2 66.2L1555.4 16.8L1558.6 64.9L1561.6 16.4L1565.3 65.4L1568.0 13.3L1571.6 66.2L1573.9 17.2L1578.1 64.8L1580.1 12.8L1582.6 65.4L1584.2 11.1L1586.8 65.0L1588.5 18.8L1591.4 66.3L1593.6 17.3L1595.9 66.0L1598.2 12.7L1601.5 65.9L1603.7 19.0L1607.2 65.1L1609.7 12.1L1612.4 65.9L1614.3 13.8L1617.0 66.2L1618.8 13.6L1621.9 65.5L1624.3 15.5L1627.7 65.1L1630.5 12.2L1634.8 66.2L1637.1 18.7L1639.6 66.3L1642.5 15.6L1646.9 65.2L1650.7 19.4L1656.2 65.2L1660.6 10.6L1665.3 66.0L1668.6 13.5L1672.0 65.1L1674.9 18.2" fill="none" stroke="#ffbf74" stroke-width="2.15" stroke-linejoin="round"/><path d="M5.5 68.4h1v23.4h-1zM13.0 68.4h1v23.4h-1zM20.9 68.4h1.2v23.4h-1.2zM26.4 68.4h1.5v23.4h-1.5zM59.2 68.4h1v23.4h-1zM70.2 68.4h1.5v23.4h-1.5zM76.2 68.4h1v23.4h-1zM115.6 68.4h1v23.4h-1zM116.6 68.4h1.2v23.4h-1.2zM169.6 68.4h1v23.4h-1zM199.0 68.4h0.8v23.4h-0.8zM201.0 68.4h1v23.4h-1zM202.0 68.4h2v23.4h-2zM208.9 68.4h1v23.4h-1zM218.2 68.4h1.5v23.4h-1.5zM234.4 68.4h1.2v23.4h-1.2zM257.2 68.4h2v23.4h-2zM264.0 68.4h1.5v23.4h-1.5zM267.5 68.4h1v23.4h-1zM270.0 68.4h1.2v23.4h-1.2zM277.0 68.4h1.2v23.4h-1.2zM279.0 68.4h1.5v23.4h-1.5zM283.4 68.4h1.5v23.4h-1.5zM312.3 68.4h1.5v23.4h-1.5zM313.8 68.4h1.2v23.4h-1.2zM321.6 68.4h0.8v23.4h-0.8zM322.4 68.4h1.5v23.4h-1.5zM338.3 68.4h1v23.4h-1zM342.6 68.4h2v23.4h-2zM348.6 68.4h1.2v23.4h-1.2zM359.1 68.4h1.5v23.4h-1.5zM376.7 68.4h2.5v23.4h-2.5zM391.9 68.4h1.2v23.4h-1.2zM398.0 68.4h1v23.4h-1zM412.1 68.4h1v23.4h-1zM420.8 68.4h1.5v23.4h-1.5zM422.3 68.4h1v23.4h-1zM433.4 68.4h2v23.4h-2zM452.5 68.4h1.5v23.4h-1.5zM463.2 68.4h1.5v23.4h-1.5zM468.1 68.4h1.2v23.4h-1.2zM469.3 68.4h1v23.4h-1zM473.5 68.4h2.5v23.4h-2.5zM480.4 68.4h2.5v23.4h-2.5zM495.0 68.4h1.5v23.4h-1.5zM496.5 68.4h1v23.4h-1zM497.5 68.4h1v23.4h-1zM499.3 68.4h1.2v23.4h-1.2zM509.9 68.4h2.5v23.4h-2.5zM539.2 68.4h2v23.4h-2zM545.0 68.4h0.8v23.4h-0.8zM554.6 68.4h2v23.4h-2zM560.3 68.4h0.8v23.4h-0.8zM564.1 68.4h2.5v23.4h-2.5zM566.6 68.4h1v23.4h-1zM594.2 68.4h2v23.4h-2zM596.2 68.4h1v23.4h-1zM598.2 68.4h1v23.4h-1zM606.5 68.4h2v23.4h-2zM640.2 68.4h1v23.4h-1zM641.2 68.4h2v23.4h-2zM643.2 68.4h1.2v23.4h-1.2zM647.8 68.4h2v23.4h-2zM665.3 68.4h0.8v23.4h-0.8zM680.0 68.4h2v23.4h-2zM682.0 68.4h1v23.4h-1zM694.1 68.4h2v23.4h-2zM696.1 68.4h2.5v23.4h-2.5zM709.6 68.4h1.2v23.4h-1.2zM720.2 68.4h1.2v23.4h-1.2zM721.4 68.4h2v23.4h-2zM736.2 68.4h1.5v23.4h-1.5zM739.5 68.4h1.5v23.4h-1.5zM741.0 68.4h1.5v23.4h-1.5zM754.0 68.4h1.5v23.4h-1.5zM764.0 68.4h2.5v23.4h-2.5zM766.5 68.4h1v23.4h-1zM773.3 68.4h1.5v23.4h-1.5zM783.1 68.4h2v23.4h-2zM797.3 68.4h1v23.4h-1zM799.4 68.4h0.8v23.4h-0.8zM811.1 68.4h0.8v23.4h-0.8zM815.8 68.4h1.5v23.4h-1.5zM821.3 68.4h1.5v23.4h-1.5zM831.9 68.4h0.8v23.4h-0.8zM832.7 68.4h1.5v23.4h-1.5zM852.4 68.4h1.2v23.4h-1.2zM857.1 68.4h1.5v23.4h-1.5zM858.6 68.4h1v23.4h-1zM876.2 68.4h1.5v23.4h-1.5zM885.6 68.4h2.5v23.4h-2.5zM900.3 68.4h1.5v23.4h-1.5zM901.8 68.4h1.5v23.4h-1.5zM905.3 68.4h1.5v23.4h-1.5zM906.8 68.4h2v23.4h-2zM921.1 68.4h2.5v23.4h-2.5zM931.8 68.4h0.8v23.4h-0.8zM941.3 68.4h2v23.4h-2zM963.1 68.4h1.5v23.4h-1.5zM967.0 68.4h1.5v23.4h-1.5zM977.5 68.4h2v23.4h-2zM981.6 68.4h1v23.4h-1zM992.5 68.4h1v23.4h-1zM1021.8 68.4h1.2v23.4h-1.2zM1037.4 68.4h2v23.4h-2zM1048.3 68.4h1.5v23.4h-1.5zM1074.7 68.4h1v23.4h-1zM1084.1 68.4h1v23.4h-1zM1100.5 68.4h2v23.4h-2zM1111.0 68.4h1.5v23.4h-1.5zM1114.1 68.4h2v23.4h-2zM1132.4 68.4h2v23.4h-2zM1143.1 68.4h1.5v23.4h-1.5zM1146.6 68.4h1.5v23.4h-1.5zM1148.1 68.4h1v23.4h-1zM1157.6 68.4h1v23.4h-1zM1158.6 68.4h1v23.4h-1zM1160.4 68.4h2v23.4h-2zM1173.7 68.4h2v23.4h-2zM1184.2 68.4h1.5v23.4h-1.5zM1214.5 68.4h0.8v23.4h-0.8zM1216.8 68.4h1.2v23.4h-1.2zM1227.0 68.4h1.2v23.4h-1.2zM1239.9 68.4h2v23.4h-2zM1247.6 68.4h1.5v23.4h-1.5zM1256.2 68.4h1v23.4h-1zM1265.5 68.4h0.8v23.4h-0.8zM1266.3 68.4h1.5v23.4h-1.5zM1274.9 68.4h1v23.4h-1zM1279.0 68.4h2v23.4h-2zM1284.6 68.4h1v23.4h-1zM1307.8 68.4h1.5v23.4h-1.5zM1319.6 68.4h0.8v23.4h-0.8zM1325.2 68.4h1.5v23.4h-1.5zM1326.7 68.4h2v23.4h-2zM1337.5 68.4h1v23.4h-1zM1340.6 68.4h1.2v23.4h-1.2zM1361.1 68.4h2.5v23.4h-2.5zM1373.7 68.4h1.2v23.4h-1.2zM1377.1 68.4h1.5v23.4h-1.5zM1379.6 68.4h2v23.4h-2zM1390.9 68.4h1.5v23.4h-1.5zM1393.9 68.4h1v23.4h-1zM1400.8 68.4h1.2v23.4h-1.2zM1403.1 68.4h1v23.4h-1zM1417.9 68.4h1.5v23.4h-1.5zM1443.1 68.4h1.5v23.4h-1.5zM1445.8 68.4h2v23.4h-2zM1465.5 68.4h1.2v23.4h-1.2zM1466.7 68.4h2v23.4h-2zM1469.9 68.4h2v23.4h-2zM1487.9 68.4h1.2v23.4h-1.2zM1495.8 68.4h2v23.4h-2zM1513.7 68.4h1.5v23.4h-1.5zM1530.2 68.4h1v23.4h-1zM1531.2 68.4h1.5v23.4h-1.5zM1533.7 68.4h1v23.4h-1zM1536.7 68.4h1.2v23.4h-1.2zM1546.7 68.4h1.2v23.4h-1.2zM1556.3 68.4h2.5v23.4h-2.5zM1559.9 68.4h2v23.4h-2zM1566.3 68.4h2.5v23.4h-2.5zM1580.6 68.4h0.8v23.4h-0.8zM1587.8 68.4h2v23.4h-2zM1622.8 68.4h1.5v23.4h-1.5zM1629.8 68.4h1v23.4h-1zM1642.9 68.4h2.5v23.4h-2.5zM1662.2 68.4h0.8v23.4h-0.8zM1666.0 68.4h2v23.4h-2zM1670.5 68.4h2.5v23.4h-2.5zM1673.0 68.4h2v23.4h-2z" fill="#0a5ac6"/><path d="M51.8 68.4h1v23.4h-1zM87.8 68.4h0.8v23.4h-0.8zM94.3 68.4h2v23.4h-2zM114.6 68.4h1v23.4h-1zM142.8 68.4h2v23.4h-2zM170.6 68.4h1.5v23.4h-1.5zM178.4 68.4h2.5v23.4h-2.5zM184.9 68.4h1.2v23.4h-1.2zM186.1 68.4h1v23.4h-1zM206.2 68.4h1v23.4h-1zM212.9 68.4h1v23.4h-1zM219.7 68.4h1.5v23.4h-1.5zM221.2 68.4h1v23.4h-1zM255.2 68.4h1v23.4h-1zM259.2 68.4h1v23.4h-1zM260.2 68.4h1.5v23.4h-1.5zM268.5 68.4h1.5v23.4h-1.5zM289.6 68.4h0.8v23.4h-0.8zM290.4 68.4h2v23.4h-2zM292.4 68.4h0.8v23.4h-0.8zM303.3 68.4h0.8v23.4h-0.8zM334.9 68.4h1.5v23.4h-1.5zM337.3 68.4h1v23.4h-1zM354.7 68.4h1.5v23.4h-1.5zM367.5 68.4h1v23.4h-1zM389.1 68.4h2v23.4h-2zM391.1 68.4h0.8v23.4h-0.8zM395.5 68.4h2.5v23.4h-2.5zM408.1 68.4h1.5v23.4h-1.5zM409.6 68.4h1.2v23.4h-1.2zM413.1 68.4h1v23.4h-1zM418.6 68.4h1.2v23.4h-1.2zM445.1 68.4h1v23.4h-1zM484.3 68.4h0.8v23.4h-0.8zM508.9 68.4h1v23.4h-1zM524.6 68.4h1.2v23.4h-1.2zM549.5 68.4h1.5v23.4h-1.5zM569.1 68.4h1v23.4h-1zM575.0 68.4h1.2v23.4h-1.2zM624.2 68.4h1v23.4h-1zM635.8 68.4h2.5v23.4h-2.5zM664.3 68.4h1v23.4h-1zM666.1 68.4h1v23.4h-1zM667.1 68.4h2v23.4h-2zM679.2 68.4h0.8v23.4h-0.8zM686.2 68.4h1.2v23.4h-1.2zM687.4 68.4h1.2v23.4h-1.2zM691.1 68.4h1.5v23.4h-1.5zM706.8 68.4h2v23.4h-2zM723.4 68.4h0.8v23.4h-0.8zM724.2 68.4h1.2v23.4h-1.2zM728.6 68.4h2v23.4h-2zM732.4 68.4h0.8v23.4h-0.8zM750.6 68.4h0.8v23.4h-0.8zM767.5 68.4h2v23.4h-2zM772.1 68.4h1.2v23.4h-1.2zM785.1 68.4h1.5v23.4h-1.5zM800.2 68.4h1.5v23.4h-1.5zM817.3 68.4h2v23.4h-2zM824.3 68.4h1.5v23.4h-1.5zM827.8 68.4h1v23.4h-1zM836.0 68.4h0.8v23.4h-0.8zM838.3 68.4h0.8v23.4h-0.8zM851.6 68.4h0.8v23.4h-0.8zM853.6 68.4h2.5v23.4h-2.5zM856.1 68.4h1v23.4h-1zM880.0 68.4h2v23.4h-2zM882.0 68.4h1.5v23.4h-1.5zM892.8 68.4h1v23.4h-1zM893.8 68.4h2.5v23.4h-2.5zM919.1 68.4h0.8v23.4h-0.8zM954.5 68.4h0.8v23.4h-0.8zM968.5 68.4h2v23.4h-2zM984.9 68.4h2.5v23.4h-2.5zM990.5 68.4h1v23.4h-1zM991.5 68.4h1v23.4h-1zM997.2 68.4h1.5v23.4h-1.5zM1001.5 68.4h1.2v23.4h-1.2zM1002.7 68.4h2v23.4h-2zM1009.3 68.4h0.8v23.4h-0.8zM1010.1 68.4h1v23.4h-1zM1023.0 68.4h1.5v23.4h-1.5zM1049.8 68.4h1.5v23.4h-1.5zM1051.3 68.4h1v23.4h-1zM1054.0 68.4h1v23.4h-1zM1064.7 68.4h1.5v23.4h-1.5zM1068.5 68.4h2.5v23.4h-2.5zM1072.0 68.4h1.5v23.4h-1.5zM1075.7 68.4h2v23.4h-2zM1082.9 68.4h1.2v23.4h-1.2zM1093.0 68.4h2.5v23.4h-2.5zM1104.6 68.4h1v23.4h-1zM1116.1 68.4h2v23.4h-2zM1127.6 68.4h0.8v23.4h-0.8zM1144.6 68.4h2v23.4h-2zM1166.4 68.4h1.5v23.4h-1.5zM1177.2 68.4h0.8v23.4h-0.8zM1201.5 68.4h0.8v23.4h-0.8zM1218.0 68.4h1v23.4h-1zM1230.6 68.4h2.5v23.4h-2.5zM1241.9 68.4h2.5v23.4h-2.5zM1257.2 68.4h1v23.4h-1zM1258.2 68.4h2v23.4h-2zM1273.9 68.4h1v23.4h-1zM1281.0 68.4h2v23.4h-2zM1288.1 68.4h2v23.4h-2zM1292.6 68.4h2v23.4h-2zM1322.4 68.4h2v23.4h-2zM1332.7 68.4h2.5v23.4h-2.5zM1336.7 68.4h0.8v23.4h-0.8zM1341.8 68.4h1v23.4h-1zM1344.8 68.4h2v23.4h-2zM1354.9 68.4h1v23.4h-1zM1374.9 68.4h1.2v23.4h-1.2zM1392.4 68.4h1.5v23.4h-1.5zM1406.5 68.4h2v23.4h-2zM1424.7 68.4h1.5v23.4h-1.5zM1427.7 68.4h1.5v23.4h-1.5zM1447.8 68.4h1.5v23.4h-1.5zM1474.4 68.4h2.5v23.4h-2.5zM1502.5 68.4h0.8v23.4h-0.8zM1508.5 68.4h2.5v23.4h-2.5zM1515.2 68.4h1.5v23.4h-1.5zM1544.2 68.4h1v23.4h-1zM1545.2 68.4h1.5v23.4h-1.5zM1547.9 68.4h2v23.4h-2zM1589.8 68.4h0.8v23.4h-0.8zM1595.8 68.4h2v23.4h-2zM1597.8 68.4h0.8v23.4h-0.8zM1603.7 68.4h1.5v23.4h-1.5zM1608.5 68.4h1.5v23.4h-1.5zM1635.7 68.4h1.2v23.4h-1.2zM1652.4 68.4h2.5v23.4h-2.5zM1668.0 68.4h2.5v23.4h-2.5z" fill="#5b97e0"/><path d="M9.9 68.4h1v23.4h-1zM22.1 68.4h1.2v23.4h-1.2zM40.5 68.4h1.5v23.4h-1.5zM51.0 68.4h0.8v23.4h-0.8zM67.7 68.4h1v23.4h-1zM72.7 68.4h2v23.4h-2zM79.6 68.4h2v23.4h-2zM83.2 68.4h2.5v23.4h-2.5zM90.5 68.4h1.5v23.4h-1.5zM92.8 68.4h1.5v23.4h-1.5zM96.3 68.4h1.5v23.4h-1.5zM108.1 68.4h2.5v23.4h-2.5zM129.6 68.4h2.5v23.4h-2.5zM135.8 68.4h1.5v23.4h-1.5zM137.3 68.4h2v23.4h-2zM139.3 68.4h2.5v23.4h-2.5zM144.8 68.4h1v23.4h-1zM145.8 68.4h0.8v23.4h-0.8zM182.9 68.4h2v23.4h-2zM197.2 68.4h0.8v23.4h-0.8zM198.0 68.4h1v23.4h-1zM211.4 68.4h1.5v23.4h-1.5zM222.2 68.4h2v23.4h-2zM229.8 68.4h2v23.4h-2zM233.4 68.4h1v23.4h-1zM239.8 68.4h1.5v23.4h-1.5zM241.3 68.4h1.5v23.4h-1.5zM249.6 68.4h2v23.4h-2zM253.2 68.4h2v23.4h-2zM273.1 68.4h2v23.4h-2zM280.5 68.4h2v23.4h-2zM287.6 68.4h2v23.4h-2zM294.8 68.4h1v23.4h-1zM306.6 68.4h2v23.4h-2zM315.0 68.4h1.5v23.4h-1.5zM316.5 68.4h1v23.4h-1zM339.3 68.4h2v23.4h-2zM369.3 68.4h1v23.4h-1zM379.2 68.4h2v23.4h-2zM401.3 68.4h0.8v23.4h-0.8zM414.1 68.4h2.5v23.4h-2.5zM430.8 68.4h1v23.4h-1zM438.7 68.4h2v23.4h-2zM441.7 68.4h1v23.4h-1zM455.5 68.4h1.5v23.4h-1.5zM487.2 68.4h2v23.4h-2zM492.6 68.4h1v23.4h-1zM498.5 68.4h0.8v23.4h-0.8zM500.5 68.4h2v23.4h-2zM532.1 68.4h1v23.4h-1zM534.6 68.4h2v23.4h-2zM545.8 68.4h1v23.4h-1zM546.8 68.4h1.5v23.4h-1.5zM551.0 68.4h1.5v23.4h-1.5zM556.6 68.4h0.8v23.4h-0.8zM561.1 68.4h1v23.4h-1zM580.3 68.4h2.5v23.4h-2.5zM599.2 68.4h2.5v23.4h-2.5zM611.9 68.4h2.5v23.4h-2.5zM619.1 68.4h2v23.4h-2zM662.3 68.4h2v23.4h-2zM669.1 68.4h2v23.4h-2zM683.0 68.4h1.2v23.4h-1.2zM684.2 68.4h2v23.4h-2zM688.6 68.4h2.5v23.4h-2.5zM725.4 68.4h1.2v23.4h-1.2zM733.2 68.4h1v23.4h-1zM734.2 68.4h2v23.4h-2zM769.5 68.4h1v23.4h-1zM774.8 68.4h1.5v23.4h-1.5zM779.0 68.4h2v23.4h-2zM790.4 68.4h2v23.4h-2zM792.4 68.4h2v23.4h-2zM839.1 68.4h1.5v23.4h-1.5zM848.0 68.4h1.5v23.4h-1.5zM859.6 68.4h1.5v23.4h-1.5zM884.6 68.4h1v23.4h-1zM889.8 68.4h1.5v23.4h-1.5zM898.8 68.4h1.5v23.4h-1.5zM914.4 68.4h1.5v23.4h-1.5zM915.9 68.4h1v23.4h-1zM916.9 68.4h1v23.4h-1zM919.9 68.4h1.2v23.4h-1.2zM943.3 68.4h0.8v23.4h-0.8zM946.1 68.4h2.5v23.4h-2.5zM949.6 68.4h2.5v23.4h-2.5zM964.6 68.4h1.2v23.4h-1.2zM975.2 68.4h1.2v23.4h-1.2zM983.9 68.4h1v23.4h-1zM1005.6 68.4h1.5v23.4h-1.5zM1024.5 68.4h0.8v23.4h-0.8zM1027.4 68.4h2v23.4h-2zM1029.4 68.4h2v23.4h-2zM1039.4 68.4h1.2v23.4h-1.2zM1122.5 68.4h1.2v23.4h-1.2zM1123.7 68.4h2v23.4h-2zM1130.9 68.4h1.5v23.4h-1.5zM1138.0 68.4h1.5v23.4h-1.5zM1162.4 68.4h2v23.4h-2zM1193.2 68.4h1.5v23.4h-1.5zM1200.3 68.4h1.2v23.4h-1.2zM1213.3 68.4h1.2v23.4h-1.2zM1224.3 68.4h1.5v23.4h-1.5zM1264.3 68.4h1.2v23.4h-1.2zM1267.8 68.4h2v23.4h-2zM1285.6 68.4h1.5v23.4h-1.5zM1298.6 68.4h1v23.4h-1zM1310.6 68.4h1.5v23.4h-1.5zM1312.1 68.4h1.5v23.4h-1.5zM1335.2 68.4h1.5v23.4h-1.5zM1376.1 68.4h1v23.4h-1zM1387.4 68.4h1v23.4h-1zM1394.9 68.4h2.5v23.4h-2.5zM1415.2 68.4h1v23.4h-1zM1430.4 68.4h1.5v23.4h-1.5zM1440.4 68.4h1.5v23.4h-1.5zM1451.4 68.4h1.5v23.4h-1.5zM1452.9 68.4h2v23.4h-2zM1459.4 68.4h2v23.4h-2zM1464.0 68.4h1.5v23.4h-1.5zM1480.1 68.4h1v23.4h-1zM1483.4 68.4h2.5v23.4h-2.5zM1485.9 68.4h2v23.4h-2zM1491.1 68.4h0.8v23.4h-0.8zM1493.1 68.4h1.5v23.4h-1.5zM1517.5 68.4h1v23.4h-1zM1563.0 68.4h1v23.4h-1zM1565.5 68.4h0.8v23.4h-0.8zM1612.2 68.4h2v23.4h-2zM1618.6 68.4h2v23.4h-2zM1638.9 68.4h1.5v23.4h-1.5zM1640.4 68.4h2.5v23.4h-2.5zM1656.4 68.4h0.8v23.4h-0.8zM1663.0 68.4h1v23.4h-1z" fill="#a9c8f0"/><path d="M42.0 68.4h0.8v23.4h-0.8zM65.8 68.4h0.8v23.4h-0.8zM74.7 68.4h1.5v23.4h-1.5zM92.0 68.4h0.8v23.4h-0.8zM99.2 68.4h1v23.4h-1zM155.0 68.4h1.5v23.4h-1.5zM164.3 68.4h1.2v23.4h-1.2zM165.5 68.4h1.2v23.4h-1.2zM265.5 68.4h2v23.4h-2zM275.1 68.4h1v23.4h-1zM284.9 68.4h1.2v23.4h-1.2zM299.8 68.4h1.5v23.4h-1.5zM351.5 68.4h2v23.4h-2zM365.5 68.4h2v23.4h-2zM372.2 68.4h2.5v23.4h-2.5zM374.7 68.4h2v23.4h-2zM416.6 68.4h2v23.4h-2zM446.1 68.4h2.5v23.4h-2.5zM451.5 68.4h1v23.4h-1zM502.5 68.4h1v23.4h-1zM557.4 68.4h0.8v23.4h-0.8zM573.0 68.4h2v23.4h-2zM634.3 68.4h1.5v23.4h-1.5zM677.2 68.4h2v23.4h-2zM742.5 68.4h1.5v23.4h-1.5zM748.1 68.4h2.5v23.4h-2.5zM809.1 68.4h2v23.4h-2zM836.8 68.4h1.5v23.4h-1.5zM871.9 68.4h1.5v23.4h-1.5zM896.3 68.4h0.8v23.4h-0.8zM923.6 68.4h2v23.4h-2zM948.6 68.4h1v23.4h-1zM959.6 68.4h2v23.4h-2zM996.0 68.4h1.2v23.4h-1.2zM999.5 68.4h0.8v23.4h-0.8zM1013.0 68.4h1.2v23.4h-1.2zM1016.2 68.4h1v23.4h-1zM1017.2 68.4h1.5v23.4h-1.5zM1052.3 68.4h0.8v23.4h-0.8zM1056.4 68.4h1v23.4h-1zM1077.7 68.4h2v23.4h-2zM1080.9 68.4h2v23.4h-2zM1088.5 68.4h0.8v23.4h-0.8zM1095.5 68.4h1v23.4h-1zM1120.5 68.4h2v23.4h-2zM1128.4 68.4h2.5v23.4h-2.5zM1185.7 68.4h1v23.4h-1zM1196.9 68.4h1.2v23.4h-1.2zM1198.1 68.4h1.2v23.4h-1.2zM1270.8 68.4h1.2v23.4h-1.2zM1277.8 68.4h1.2v23.4h-1.2zM1287.1 68.4h1v23.4h-1zM1297.4 68.4h1.2v23.4h-1.2zM1324.4 68.4h0.8v23.4h-0.8zM1352.9 68.4h2v23.4h-2zM1365.4 68.4h2v23.4h-2zM1382.8 68.4h0.8v23.4h-0.8zM1389.9 68.4h1v23.4h-1zM1399.3 68.4h1.5v23.4h-1.5zM1420.6 68.4h2.5v23.4h-2.5zM1429.2 68.4h1.2v23.4h-1.2zM1431.9 68.4h2.5v23.4h-2.5zM1441.9 68.4h1.2v23.4h-1.2zM1491.9 68.4h1.2v23.4h-1.2zM1505.1 68.4h1.5v23.4h-1.5zM1574.9 68.4h1.5v23.4h-1.5zM1581.4 68.4h1.5v23.4h-1.5zM1590.6 68.4h2v23.4h-2zM1592.6 68.4h1v23.4h-1zM1615.8 68.4h1v23.4h-1zM1659.4 68.4h0.8v23.4h-0.8zM1661.2 68.4h1v23.4h-1z" fill="#1d5872"/><path d="M2.5 68.4h1.5v23.4h-1.5zM25.6 68.4h0.8v23.4h-0.8zM39.7 68.4h0.8v23.4h-0.8zM45.9 68.4h1.5v23.4h-1.5zM71.7 68.4h1v23.4h-1zM100.2 68.4h1.5v23.4h-1.5zM124.3 68.4h1v23.4h-1zM132.1 68.4h2.5v23.4h-2.5zM141.8 68.4h1v23.4h-1zM154.0 68.4h1v23.4h-1zM162.3 68.4h2v23.4h-2zM172.1 68.4h1.5v23.4h-1.5zM187.1 68.4h2v23.4h-2zM192.8 68.4h1.5v23.4h-1.5zM199.8 68.4h1.2v23.4h-1.2zM209.9 68.4h1.5v23.4h-1.5zM215.7 68.4h2.5v23.4h-2.5zM278.2 68.4h0.8v23.4h-0.8zM295.8 68.4h1v23.4h-1zM296.8 68.4h1v23.4h-1zM301.3 68.4h2v23.4h-2zM304.1 68.4h1.2v23.4h-1.2zM310.3 68.4h2v23.4h-2zM317.5 68.4h2v23.4h-2zM323.9 68.4h2v23.4h-2zM333.7 68.4h1.2v23.4h-1.2zM344.6 68.4h1v23.4h-1zM345.6 68.4h2v23.4h-2zM358.3 68.4h0.8v23.4h-0.8zM381.2 68.4h0.8v23.4h-0.8zM419.8 68.4h1v23.4h-1zM425.0 68.4h1.5v23.4h-1.5zM440.7 68.4h1v23.4h-1zM459.3 68.4h1v23.4h-1zM467.1 68.4h1v23.4h-1zM477.2 68.4h2v23.4h-2zM515.6 68.4h1.2v23.4h-1.2zM533.1 68.4h1.5v23.4h-1.5zM541.2 68.4h1.5v23.4h-1.5zM562.1 68.4h2v23.4h-2zM583.8 68.4h2v23.4h-2zM586.7 68.4h2.5v23.4h-2.5zM589.2 68.4h1.2v23.4h-1.2zM623.2 68.4h1v23.4h-1zM652.0 68.4h2.5v23.4h-2.5zM656.6 68.4h2v23.4h-2zM658.6 68.4h1.5v23.4h-1.5zM671.1 68.4h2.5v23.4h-2.5zM692.6 68.4h1.5v23.4h-1.5zM708.8 68.4h0.8v23.4h-0.8zM710.8 68.4h2v23.4h-2zM726.6 68.4h2v23.4h-2zM751.4 68.4h1v23.4h-1zM825.8 68.4h2v23.4h-2zM829.9 68.4h2v23.4h-2zM903.3 68.4h0.8v23.4h-0.8zM908.8 68.4h2v23.4h-2zM913.2 68.4h1.2v23.4h-1.2zM917.9 68.4h1.2v23.4h-1.2zM925.6 68.4h2v23.4h-2zM929.8 68.4h2v23.4h-2zM944.1 68.4h2v23.4h-2zM974.2 68.4h1v23.4h-1zM993.5 68.4h2.5v23.4h-2.5zM1014.2 68.4h2v23.4h-2zM1020.3 68.4h1.5v23.4h-1.5zM1031.4 68.4h1.2v23.4h-1.2zM1035.4 68.4h2v23.4h-2zM1066.2 68.4h0.8v23.4h-0.8zM1071.0 68.4h1v23.4h-1zM1073.5 68.4h1.2v23.4h-1.2zM1085.1 68.4h2v23.4h-2zM1089.3 68.4h1.5v23.4h-1.5zM1105.6 68.4h1v23.4h-1zM1106.6 68.4h1.2v23.4h-1.2zM1107.8 68.4h1.2v23.4h-1.2zM1109.0 68.4h2v23.4h-2zM1119.0 68.4h1.5v23.4h-1.5zM1135.9 68.4h1v23.4h-1zM1159.6 68.4h0.8v23.4h-0.8zM1175.7 68.4h1.5v23.4h-1.5zM1188.0 68.4h2.5v23.4h-2.5zM1203.5 68.4h2v23.4h-2zM1205.5 68.4h2.5v23.4h-2.5zM1209.4 68.4h2v23.4h-2zM1222.8 68.4h1.5v23.4h-1.5zM1234.1 68.4h2v23.4h-2zM1252.5 68.4h1.5v23.4h-1.5zM1260.2 68.4h2v23.4h-2zM1269.8 68.4h1v23.4h-1zM1290.1 68.4h2.5v23.4h-2.5zM1299.6 68.4h2v23.4h-2zM1301.6 68.4h1v23.4h-1zM1313.6 68.4h1.2v23.4h-1.2zM1351.7 68.4h1.2v23.4h-1.2zM1358.1 68.4h1.5v23.4h-1.5zM1359.6 68.4h1.5v23.4h-1.5zM1381.6 68.4h1.2v23.4h-1.2zM1419.4 68.4h1.2v23.4h-1.2zM1426.2 68.4h1.5v23.4h-1.5zM1435.9 68.4h2v23.4h-2zM1437.9 68.4h2.5v23.4h-2.5zM1456.1 68.4h0.8v23.4h-0.8zM1456.9 68.4h2.5v23.4h-2.5zM1468.7 68.4h1.2v23.4h-1.2zM1471.9 68.4h2.5v23.4h-2.5zM1481.1 68.4h1.2v23.4h-1.2zM1489.1 68.4h2v23.4h-2zM1512.7 68.4h1v23.4h-1zM1516.7 68.4h0.8v23.4h-0.8zM1541.0 68.4h0.8v23.4h-0.8zM1551.6 68.4h1.5v23.4h-1.5zM1553.1 68.4h1v23.4h-1zM1564.0 68.4h1.5v23.4h-1.5zM1568.8 68.4h1.5v23.4h-1.5zM1570.3 68.4h1v23.4h-1zM1571.3 68.4h1.2v23.4h-1.2zM1594.6 68.4h1.2v23.4h-1.2zM1620.6 68.4h1v23.4h-1zM1624.3 68.4h0.8v23.4h-0.8zM1625.1 68.4h2v23.4h-2zM1645.4 68.4h1.5v23.4h-1.5zM1648.7 68.4h0.8v23.4h-0.8zM1649.5 68.4h1.5v23.4h-1.5zM1654.9 68.4h1.5v23.4h-1.5zM1664.0 68.4h2v23.4h-2z" fill="#c4e8fb"/><path d="M1.6 96.0H1678M2.6 96.0V103.6M157.1 96.0V103.6M441.8 96.0V103.6M727.7 96.0V103.6M994.8 96.0V103.6M1280.2 96.0V103.6M1556.1 96.0V103.6M1677.0 96.0V103.6" fill="none" stroke="#111" stroke-width="2.2"/><path d="M1675.4 7.5V92.0M1677.8 7.5V92.0" stroke="#111" stroke-width="1.6"/><rect x="1669.0" y="22.6" width="9.8" height="34.8" rx="2" fill="#111"/><rect x="1672.2" y="74.0" width="6" height="11.6" rx="2" fill="#b5b5b5"/></svg>
<span class="t" style="left:1119.3px;top:1567.1px;font-size:20px;color:#222;">Dec</span>
<span class="t" style="left:1399.6px;top:1567.1px;font-size:20px;color:#222;">2024</span>
<span class="t" style="left:1690.5px;top:1567.1px;font-size:20px;color:#222;">Feb</span>
<span class="t" style="left:1957.6px;top:1567.1px;font-size:20px;color:#222;">Mar</span>
<span class="t" style="left:2244.6px;top:1567.1px;font-size:20px;color:#222;">Apr</span>
<span class="t" style="left:2517.2px;top:1567.1px;font-size:20px;color:#222;">May</span>
<div class="btn" style="left:982.5px;top:1605.0px;width:490.2px;height:46.6px;"></div>
<div class="b" style="left:1048.2px;top:1605.0px;width:1.8px;height:46.6px;background:#efefef"></div>
<div class="b" style="left:1121.8px;top:1605.0px;width:1.8px;height:46.6px;background:#efefef"></div>
<div class="b" style="left:1191.7px;top:1605.0px;width:1.8px;height:46.6px;background:#efefef"></div>
<div class="b" style="left:1262.6px;top:1605.0px;width:1.8px;height:46.6px;background:#efefef"></div>
<div class="b" style="left:1333.9px;top:1605.0px;width:1.8px;height:46.6px;background:#efefef"></div>
<div class="b" style="left:1396.1px;top:1605.0px;width:1.8px;height:46.6px;background:#efefef"></div>
<span class="t" style="left:1000.3px;top:1616.3px;font-size:24px;color:#1b1c20;letter-spacing:0.32px;">1D</span>
<span class="t" style="left:1066.9px;top:1616.3px;font-size:24px;color:#1b1c20;letter-spacing:1.60px;">1W</span>
<span class="t" style="left:1140.5px;top:1616.3px;font-size:24px;color:#1b1c20;letter-spacing:1.26px;">1M</span>
<span class="t" style="left:1210.4px;top:1616.3px;font-size:24px;color:#1b1c20;letter-spacing:1.96px;">3M</span>
<span class="t" style="left:1281.0px;top:1616.3px;font-size:24px;color:#0b5cad;letter-spacing:1.96px;">6M</span>
<span class="t" style="left:1352.3px;top:1616.3px;font-size:24px;color:#1b1c20;letter-spacing:-1.46px;">1Y</span>
<span class="t" style="left:1414.5px;top:1616.3px;font-size:24px;color:#1b1c20;letter-spacing:-1.05px;">ALL</span>
<div class="btn" style="left:1506.9px;top:1605.0px;width:206.8px;height:46.6px;"></div>
<div class="b" style="left:1666.7px;top:1605.0px;width:1.8px;height:46.6px;background:#efefef"></div>
<span class="t" style="left:1524.7px;top:1616.3px;font-size:24px;color:#1b1c20;letter-spacing:-0.67px;">CUSTOM</span>
<svg class="b" style="left:1638.0px;top:1624.0px;" width="17" height="9" viewBox="0 0 17 9"><path d="M0.2 8.8H16.2L8.2 0.4z" fill="#a6a6a6"/></svg>
<svg class="b" style="left:1679.0px;top:1621.5px;" width="24" height="19" viewBox="0 0 24 19"><rect x="1.3" y="1.3" width="20.6" height="15.6" rx="2.4" fill="none" stroke="#333" stroke-width="2.2"/><circle cx="5.6" cy="9.1" r="1.1" fill="#333"/><circle cx="17.6" cy="9.1" r="1.1" fill="#333"/><circle cx="11.6" cy="4.8" r="1.1" fill="#333"/><circle cx="11.6" cy="13.4" r="1.1" fill="#333"/></svg>
<div class="b" style="left:213.0px;top:256.0px;width:1.5px;height:1404.0px;background:#f3f3f4"></div>
<div class="b" style="left:214.6px;top:276.6px;width:683.0px;height:2.0px;background:#f1f1f2"></div>
<div class="b" style="left:247.0px;top:311.0px;width:618.4px;height:80.4px;background:#00115c;border-radius:7px"></div>
<span class="t" style="left:412.7px;top:338.2px;font-size:30px;color:#fff;letter-spacing:0.36px;">Search and calculate</span>
<span class="t" style="left:248.5px;top:456.0px;font-size:28px;color:#1b1c20;font-weight:700;letter-spacing:-0.68px;">RESULTS (7/1090)</span>
<div class="btn" style="left:802.0px;top:438.6px;width:62.8px;height:62.8px;"></div>
<svg class="b" style="left:828.0px;top:456.0px;" width="12" height="28" viewBox="0 0 12 28"><circle cx="5.5" cy="5.8" r="2.7" fill="#555"/><circle cx="5.5" cy="13.9" r="2.7" fill="#555"/><circle cx="5.5" cy="22" r="2.7" fill="#555"/></svg>
<div class="btn" style="left:248.0px;top:517.4px;width:616.8px;height:62.6px;"></div>
<span class="t" style="left:271.0px;top:534.3px;font-size:28px;color:#1b1c20;letter-spacing:-0.63px;">Average</span>
<svg class="b" style="left:825.0px;top:542.0px;" width="17" height="12" viewBox="0 0 17 12"><path d="M0 0H16L8 11.6z" fill="#c4c4c4"/></svg>
<div class="b" style="left:214.6px;top:607.8px;width:683.0px;height:2.0px;background:#f1f1f2"></div>
<svg class="b" style="left:257.0px;top:642.0px;" width="21" height="19" viewBox="0 0 20 18.5"><path d="M10 1.2L0.4 9.8H3V17.8H8V12H12V17.8H17V9.8H19.6z" fill="#4a4a4a"/></svg>
<svg class="b" style="left:300.5px;top:644.0px;" width="12" height="17" viewBox="0 0 12 17"><path d="M1.6 1.6L8.6 8.2L1.6 14.8" fill="none" stroke="#9b9b9b" stroke-width="2.2"/></svg>
<svg class="b" style="left:392.4px;top:644.0px;" width="12" height="17" viewBox="0 0 12 17"><path d="M1.6 1.6L8.6 8.2L1.6 14.8" fill="none" stroke="#9b9b9b" stroke-width="2.2"/></svg>
<svg class="b" style="left:483.8px;top:644.0px;" width="12" height="17" viewBox="0 0 12 17"><path d="M1.6 1.6L8.6 8.2L1.6 14.8" fill="none" stroke="#9b9b9b" stroke-width="2.2"/></svg>
<div class="btn" style="left:328.0px;top:626.7px;width:47.0px;height:46.5px;"></div>
<svg class="b" style="left:341.0px;top:648.0px;" width="22" height="8" viewBox="0 0 22 8"><circle cx="3.5" cy="3.7" r="1.9" fill="#444"/><circle cx="10.7" cy="3.7" r="1.9" fill="#444"/><circle cx="18" cy="3.7" r="1.9" fill="#444"/></svg>
<span class="t" style="left:421.0px;top:638.7px;font-size:24px;color:#9b9b9b;letter-spacing:-0.17px;">May</span>
<span class="t" style="left:511.7px;top:638.7px;font-size:24px;color:#9b9b9b;letter-spacing:0.16px;">13 - Monday</span>
<div class="btn" style="left:772.0px;top:626.7px;width:47.4px;height:46.5px;border-radius:6px 0 0 6px;"></div>
<svg class="b" style="left:780.0px;top:636.0px;" width="30" height="28" viewBox="0 0 30 28"><path d="M7 2.4V22" stroke="#444" stroke-width="2.8" fill="none"/><path d="M2.2 18.4L7 25.2L11.8 18.4z" fill="#444"/><path d="M15.2 3.6H27M15.2 10.4H24M15.2 17.2H21.2M15.2 24H18.8" stroke="#444" stroke-width="3" fill="none"/></svg>
<svg class="b" style="left:833.0px;top:638.0px;" width="18" height="24" viewBox="0 0 18 24"><path d="M0.6 1.6H16.6M0.6 22H16.6" stroke="#dcdcdc" stroke-width="2.4"/><path d="M5.2 9.6L8.6 6.4L12 9.6M5.2 14L8.6 17.2L12 14" fill="none" stroke="#dcdcdc" stroke-width="2"/></svg>
<div class="b" style="left:214.6px;top:689.2px;width:683.0px;height:2.0px;background:#f1f1f2"></div>
<div class="b" style="left:214.6px;top:691px;width:683px;height:846px;overflow:hidden"><span class="t" style="left:89.7px;top:19.2px;font-size:29px;color:#1b1c20;font-weight:700;letter-spacing:0.32px;">13/05/2024 23:59:00</span><span class="t" style="left:89.7px;top:52.7px;font-size:24px;color:#555;letter-spacing:-0.50px;">3m</span><span class="t" style="left:89.7px;top:85.9px;font-size:24px;color:#555;letter-spacing:-0.17px;">Average: 46.5</span><span class="t" style="left:89.7px;top:117.9px;font-size:24px;color:#0b5cad;letter-spacing:-0.22px;">Add layer</span><div class="b" style="left:205.4px;top:113.7px;width:1.8px;height:31.0px;background:#ececec"></div><span class="t" style="left:224.7px;top:117.9px;font-size:24px;color:#0b5cad;letter-spacing:-0.70px;">Set as base layer</span><div class="b" style="left:32.7px;top:65.1px;width:32.0px;height:32.0px;background:#0057b8;border-radius:6px"></div><svg class="b" style="left:36.7px;top:71.1px;" width="26" height="22" viewBox="0 0 26 22"><path d="M5.1 10.1L10.6 14.3L19.5 5.8" fill="none" stroke="#fff" stroke-width="3.7" stroke-linecap="round" stroke-linejoin="round"/></svg><div class="b" style="left:0.0px;top:161.6px;width:683.0px;height:2.0px;background:#f1f1f2"></div><span class="t" style="left:89.7px;top:181.4px;font-size:29px;color:#1b1c20;font-weight:700;letter-spacing:0.32px;">13/05/2024 23:57:00</span><span class="t" style="left:89.7px;top:214.9px;font-size:24px;color:#555;letter-spacing:-0.50px;">1m</span><span class="t" style="left:89.7px;top:248.1px;font-size:24px;color:#555;letter-spacing:-0.13px;">Average: 46</span><span class="t" style="left:89.7px;top:280.1px;font-size:24px;color:#0b5cad;letter-spacing:-0.22px;">Add layer</span><div class="b" style="left:205.4px;top:275.9px;width:1.8px;height:31.0px;background:#ececec"></div><span class="t" style="left:224.7px;top:280.1px;font-size:24px;color:#0b5cad;letter-spacing:-0.70px;">Set as base layer</span><div class="b" style="left:32.7px;top:227.3px;width:32.0px;height:32.0px;background:#0057b8;border-radius:6px"></div><svg class="b" style="left:36.7px;top:233.3px;" width="26" height="22" viewBox="0 0 26 22"><path d="M5.1 10.1L10.6 14.3L19.5 5.8" fill="none" stroke="#fff" stroke-width="3.7" stroke-linecap="round" stroke-linejoin="round"/></svg><div class="b" style="left:0.0px;top:323.8px;width:683.0px;height:2.0px;background:#f1f1f2"></div><span class="t" style="left:89.7px;top:344.3px;font-size:29px;color:#1b1c20;font-weight:700;letter-spacing:0.32px;">13/05/2024 23:53:00</span><span class="t" style="left:89.7px;top:377.8px;font-size:24px;color:#555;letter-spacing:-0.50px;">1m</span><span class="t" style="left:89.7px;top:411.0px;font-size:24px;color:#555;letter-spacing:-0.17px;">Average: 45.6</span><span class="t" style="left:89.7px;top:443.0px;font-size:24px;color:#0b5cad;letter-spacing:-0.22px;">Add layer</span><div class="b" style="left:205.4px;top:438.8px;width:1.8px;height:31.0px;background:#ececec"></div><span class="t" style="left:224.7px;top:443.0px;font-size:24px;color:#0b5cad;letter-spacing:-0.70px;">Set as base layer</span><div class="b" style="left:32.7px;top:390.2px;width:32.0px;height:32.0px;background:#0057b8;border-radius:6px"></div><svg class="b" style="left:36.7px;top:396.2px;" width="26" height="22" viewBox="0 0 26 22"><path d="M5.1 10.1L10.6 14.3L19.5 5.8" fill="none" stroke="#fff" stroke-width="3.7" stroke-linecap="round" stroke-linejoin="round"/></svg><div class="b" style="left:0.0px;top:486.7px;width:683.0px;height:2.0px;background:#f1f1f2"></div><span class="t" style="left:89.7px;top:507.2px;font-size:29px;color:#1b1c20;font-weight:700;letter-spacing:0.32px;">13/05/2024 21:13:00</span><span class="t" style="left:89.7px;top:540.7px;font-size:24px;color:#555;letter-spacing:-0.50px;">7m</span><span class="t" style="left:89.7px;top:573.9px;font-size:24px;color:#555;letter-spacing:-0.13px;">Average: 46</span><span class="t" style="left:89.7px;top:605.9px;font-size:24px;color:#0b5cad;letter-spacing:-0.22px;">Add layer</span><div class="b" style="left:205.4px;top:601.7px;width:1.8px;height:31.0px;background:#ececec"></div><span class="t" style="left:224.7px;top:605.9px;font-size:24px;color:#0b5cad;letter-spacing:-0.70px;">Set as base layer</span><div class="b" style="left:32.7px;top:553.1px;width:32.0px;height:32.0px;background:#fff;border:2px solid #e4e4e6;border-radius:6px"></div><div class="b" style="left:0.0px;top:649.6px;width:683.0px;height:2.0px;background:#f1f1f2"></div><span class="t" style="left:89.7px;top:670.1px;font-size:29px;color:#1b1c20;font-weight:700;letter-spacing:0.32px;">13/05/2024 19:56:00</span><span class="t" style="left:89.7px;top:703.6px;font-size:24px;color:#555;letter-spacing:-0.50px;">2m</span><span class="t" style="left:89.7px;top:736.8px;font-size:24px;color:#555;letter-spacing:-0.17px;">Average: 46.3</span><span class="t" style="left:89.7px;top:768.8px;font-size:24px;color:#0b5cad;letter-spacing:-0.22px;">Add layer</span><div class="b" style="left:205.4px;top:764.6px;width:1.8px;height:31.0px;background:#ececec"></div><span class="t" style="left:224.7px;top:768.8px;font-size:24px;color:#0b5cad;letter-spacing:-0.70px;">Set as base layer</span><div class="b" style="left:32.7px;top:716.0px;width:32.0px;height:32.0px;background:#0057b8;border-radius:6px"></div><svg class="b" style="left:36.7px;top:722.0px;" width="26" height="22" viewBox="0 0 26 22"><path d="M5.1 10.1L10.6 14.3L19.5 5.8" fill="none" stroke="#fff" stroke-width="3.7" stroke-linecap="round" stroke-linejoin="round"/></svg><div class="b" style="left:0.0px;top:812.5px;width:683.0px;height:2.0px;background:#f1f1f2"></div><span class="t" style="left:89.7px;top:833.0px;font-size:29px;color:#1b1c20;font-weight:700;letter-spacing:0.32px;">13/05/2024 18:36:00</span><span class="t" style="left:89.7px;top:866.5px;font-size:24px;color:#555;letter-spacing:-0.50px;">2m</span><span class="t" style="left:89.7px;top:899.7px;font-size:24px;color:#555;letter-spacing:-0.17px;">Average: 45.9</span><span class="t" style="left:89.7px;top:931.7px;font-size:24px;color:#0b5cad;letter-spacing:-0.22px;">Add layer</span><div class="b" style="left:205.4px;top:927.5px;width:1.8px;height:31.0px;background:#ececec"></div><span class="t" style="left:224.7px;top:931.7px;font-size:24px;color:#0b5cad;letter-spacing:-0.70px;">Set as base layer</span><div class="b" style="left:32.7px;top:878.9px;width:32.0px;height:32.0px;background:#fff;border:2px solid #e4e4e6;border-radius:6px"></div><div class="b" style="left:0.0px;top:975.4px;width:683.0px;height:2.0px;background:#f1f1f2"></div></div>
<div class="b" style="left:889.3px;top:592.0px;width:7.8px;height:889.7px;background:#c9c9c9"></div>
<div class="b" style="left:883.3px;top:879.2px;width:30.4px;height:103.2px;background:#fff;border:1.6px solid #f0f0f1;border-radius:7px"></div>
<div class="b" style="left:883.3px;top:950.6px;width:30.4px;height:1.6px;background:#f0f0f1"></div>
<div class="b" style="left:894.3px;top:892.6px;width:2.0px;height:44.4px;background:#a8a8a8"></div>
<div class="b" style="left:900.2px;top:892.6px;width:2.0px;height:44.4px;background:#a8a8a8"></div>
<svg class="b" style="left:892.0px;top:961.5px;" width="12" height="12" viewBox="0 0 12 12"><path d="M1 1L11 11M11 1L1 11" stroke="#9a9a9a" stroke-width="1.3"/></svg>
<div class="b" style="left:214.6px;top:1536.4px;width:683.0px;height:2.0px;background:#efeff0"></div>
<div class="b" style="left:247.2px;top:1572.4px;width:102.2px;height:63.6px;background:#0057b8;border-radius:6px"></div>
<span class="t" style="left:273.4px;top:1590.5px;font-size:28px;color:#fff;letter-spacing:-0.06px;">Add</span>
<span class="t" style="left:374.6px;top:1576.7px;font-size:24px;color:#222;letter-spacing:-0.23px;">4 results selected.</span>
<svg class="b" style="left:376.0px;top:1610.5px;" width="30" height="22" viewBox="0 0 30 22"><path d="M0.4 2.6H19.6M0.4 9.2H19.6M0.4 15.8H12.4" stroke="#0b5cad" stroke-width="2.6"/><path d="M15.6 15.4L20 19.6L28.6 10.6" fill="none" stroke="#0b5cad" stroke-width="2.6"/></svg>
<span class="t" style="left:415.0px;top:1609.3px;font-size:24px;color:#0b5cad;letter-spacing:-0.57px;">Select all (7)</span>
<svg class="b" style="left:846.0px;top:1568.0px;" width="22" height="22" viewBox="0 0 22 22"><path d="M1.6 1.6L20.4 20.4M20.4 1.6L1.6 20.4" stroke="#b9b9b9" stroke-width="4"/></svg>
<svg class="b" style="left:278.0px;top:751.9px;" width="204" height="72.1" viewBox="0 0 204 72.1"><path d="M4.1 6.0H199.9" stroke="#6a0dfb" stroke-width="3.8" fill="none" stroke-dasharray="11.5 8.7 57.1 8.4 23.5 9.2 23.5 9.2 23.5 9.2 11.8"/><path d="M4.1 66.1H199.9" stroke="#6a0dfb" stroke-width="3.8" fill="none" stroke-dasharray="11.5 8.7 57.1 8.4 23.5 9.2 23.5 9.2 23.5 9.2 11.8"/><path d="M6.0 4.1V68.0" stroke="#6a0dfb" stroke-width="3.8" fill="none" stroke-dasharray="11.3 9.2 22.7 9.2 11.5"/><path d="M198.0 4.1V68.0" stroke="#6a0dfb" stroke-width="3.8" fill="none" stroke-dasharray="11.3 9.2 22.7 9.2 11.5"/></svg>
<svg class="b" style="left:215.9px;top:1546.0px;" width="378.2" height="114.1" viewBox="0 0 378.2 114.1"><path d="M4.1 6.0H374.1" stroke="#6a0dfb" stroke-width="3.8" fill="none" stroke-dasharray="11.46 7.88 23 7.88 23 7.88 23 7.88 23 7.88 23 7.88 23 7.88 23 7.88 23 7.88 23 7.88 23 7.88 23 7.88 11.46"/><path d="M4.1 108.1H374.1" stroke="#6a0dfb" stroke-width="3.8" fill="none" stroke-dasharray="11.46 7.88 23 7.88 23 7.88 23 7.88 23 7.88 23 7.88 23 7.88 23 7.88 23 7.88 23 7.88 23 7.88 23 7.88 11.46"/><path d="M6.0 4.1V110.0" stroke="#6a0dfb" stroke-width="3.8" fill="none" stroke-dasharray="12.6 10.1 25.2 10.1 25.2 10.1 12.6"/><path d="M372.2 4.1V110.0" stroke="#6a0dfb" stroke-width="3.8" fill="none" stroke-dasharray="12.6 10.1 25.2 10.1 25.2 10.1 12.6"/></svg>
<svg class="b" style="left:500.0px;top:768.0px;" width="256" height="40" viewBox="0 0 256 40"><path d="M10.6 19.7H250" stroke="#6a0dfb" stroke-width="3.8" fill="none"/><path d="M22.6 7.2L10.2 19.7L22.6 32.2" fill="none" stroke="#6a0dfb" stroke-width="4" stroke-linecap="round" stroke-linejoin="round"/></svg>
</body></html>
